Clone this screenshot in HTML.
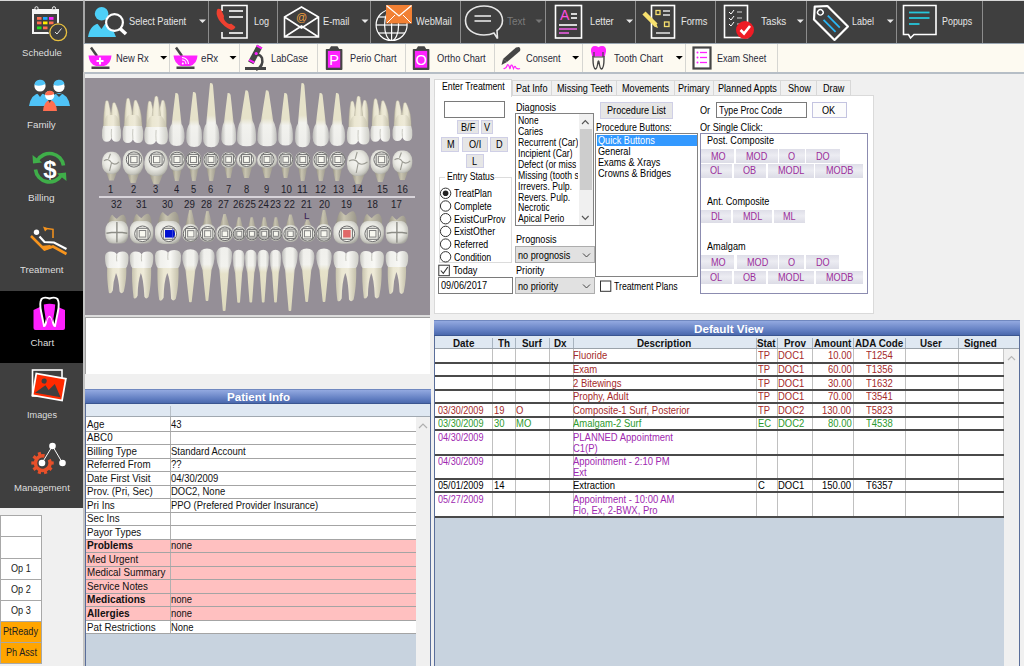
<!DOCTYPE html><html><head><meta charset="utf-8"><style>
html,body{margin:0;padding:0;}
body{width:1024px;height:666px;overflow:hidden;position:relative;background:#f0f0f0;font-family:"Liberation Sans",sans-serif;}
.t{position:absolute;white-space:nowrap;line-height:normal;transform-origin:0 0;}
.r{position:absolute;box-sizing:border-box;}
svg{position:absolute;overflow:visible;}
</style></head><body>
<div class="r" style="left:0px;top:0px;width:1024px;height:1px;background:#d8d8d8;"></div>
<div class="r" style="left:0px;top:1px;width:83px;height:507px;background:#3f3f3f;"></div>
<div class="r" style="left:0px;top:291px;width:83px;height:72px;background:#000;"></div>
<div class="r" style="left:83px;top:0px;width:2px;height:508px;background:#a6a6a6;"></div>
<div class="r" style="left:85px;top:1px;width:939px;height:42px;background:#3f3f3f;"></div>
<div class="r" style="left:84px;top:43px;width:940px;height:1px;background:#9aa6b2;"></div>
<div class="r" style="left:84px;top:44px;width:940px;height:28px;background:#fdfaf1;"></div>
<div class="r" style="left:84px;top:72px;width:940px;height:2px;background:#b6bec6;"></div>
<div class="r" style="left:208px;top:1px;width:1px;height:42px;background:#8c8c8c;"></div>
<div class="r" style="left:277px;top:1px;width:1px;height:42px;background:#8c8c8c;"></div>
<div class="r" style="left:370px;top:1px;width:1px;height:42px;background:#8c8c8c;"></div>
<div class="r" style="left:460px;top:1px;width:1px;height:42px;background:#8c8c8c;"></div>
<div class="r" style="left:545px;top:1px;width:1px;height:42px;background:#8c8c8c;"></div>
<div class="r" style="left:635px;top:1px;width:1px;height:42px;background:#8c8c8c;"></div>
<div class="r" style="left:715px;top:1px;width:1px;height:42px;background:#8c8c8c;"></div>
<div class="r" style="left:806px;top:1px;width:1px;height:42px;background:#8c8c8c;"></div>
<div class="r" style="left:896px;top:1px;width:1px;height:42px;background:#8c8c8c;"></div>
<div class="r" style="left:982px;top:1px;width:1px;height:42px;background:#8c8c8c;"></div>
<div class="r" style="left:169px;top:44px;width:1px;height:28px;background:#d6d6d2;"></div>
<div class="r" style="left:239px;top:44px;width:1px;height:28px;background:#d6d6d2;"></div>
<div class="r" style="left:317px;top:44px;width:1px;height:28px;background:#d6d6d2;"></div>
<div class="r" style="left:405px;top:44px;width:1px;height:28px;background:#d6d6d2;"></div>
<div class="r" style="left:494px;top:44px;width:1px;height:28px;background:#d6d6d2;"></div>
<div class="r" style="left:582px;top:44px;width:1px;height:28px;background:#d6d6d2;"></div>
<div class="r" style="left:685px;top:44px;width:1px;height:28px;background:#d6d6d2;"></div>
<div class="r" style="left:777px;top:44px;width:1px;height:28px;background:#d6d6d2;"></div>
<div class="t" style="left:22.30px;top:46.87px;font-size:9.7px;color:#dedede;transform:scaleX(0.989);">Schedule</div>
<div class="t" style="left:27.10px;top:119.17px;font-size:9.7px;color:#dedede;transform:scaleX(1.008);">Family</div>
<div class="t" style="left:27.80px;top:192.17px;font-size:9.7px;color:#dedede;transform:scaleX(1.028);">Billing</div>
<div class="t" style="left:20.10px;top:264.17px;font-size:9.7px;color:#dedede;transform:scaleX(0.994);">Treatment</div>
<div class="t" style="left:30.55px;top:336.77px;font-size:9.7px;color:#dedede;">Chart</div>
<div class="t" style="left:26.80px;top:409.07px;font-size:9.7px;color:#dedede;transform:scaleX(0.943);">Images</div>
<div class="t" style="left:13.50px;top:481.97px;font-size:9.7px;color:#dedede;transform:scaleX(0.987);">Management</div>
<div class="t" style="left:129.30px;top:15.13px;font-size:11.3px;color:#e6e6e6;transform:scaleX(0.820);">Select Patient</div>
<div class="t" style="left:253.90px;top:15.13px;font-size:11.3px;color:#e6e6e6;transform:scaleX(0.801);">Log</div>
<div class="t" style="left:323.00px;top:15.13px;font-size:11.3px;color:#e6e6e6;transform:scaleX(0.824);">E-mail</div>
<div class="t" style="left:415.70px;top:15.13px;font-size:11.3px;color:#e6e6e6;transform:scaleX(0.816);">WebMail</div>
<div class="t" style="left:506.60px;top:15.13px;font-size:11.3px;color:#7a7a7a;transform:scaleX(0.888);">Text</div>
<div class="t" style="left:590.40px;top:15.13px;font-size:11.3px;color:#e6e6e6;transform:scaleX(0.820);">Letter</div>
<div class="t" style="left:680.80px;top:15.13px;font-size:11.3px;color:#e6e6e6;transform:scaleX(0.822);">Forms</div>
<div class="t" style="left:760.90px;top:15.13px;font-size:11.3px;color:#e6e6e6;transform:scaleX(0.876);">Tasks</div>
<div class="t" style="left:852.20px;top:15.13px;font-size:11.3px;color:#e6e6e6;transform:scaleX(0.792);">Label</div>
<div class="t" style="left:941.80px;top:15.13px;font-size:11.3px;color:#e6e6e6;transform:scaleX(0.788);">Popups</div>
<div class="t" style="left:115.60px;top:52.03px;font-size:11.3px;color:#2a2a3a;transform:scaleX(0.829);">New Rx</div>
<div class="t" style="left:201.20px;top:52.03px;font-size:11.3px;color:#2a2a3a;transform:scaleX(0.856);">eRx</div>
<div class="t" style="left:270.80px;top:52.03px;font-size:11.3px;color:#2a2a3a;transform:scaleX(0.816);">LabCase</div>
<div class="t" style="left:349.80px;top:52.03px;font-size:11.3px;color:#2a2a3a;transform:scaleX(0.815);">Perio Chart</div>
<div class="t" style="left:437.20px;top:52.03px;font-size:11.3px;color:#2a2a3a;transform:scaleX(0.825);">Ortho Chart</div>
<div class="t" style="left:526.30px;top:52.03px;font-size:11.3px;color:#2a2a3a;transform:scaleX(0.820);">Consent</div>
<div class="t" style="left:614.30px;top:52.03px;font-size:11.3px;color:#2a2a3a;transform:scaleX(0.835);">Tooth Chart</div>
<div class="t" style="left:717.40px;top:52.03px;font-size:11.3px;color:#2a2a3a;transform:scaleX(0.799);">Exam Sheet</div>
<svg style="left:0;top:0" width="1024" height="666" viewBox="0 0 1024 666"><rect x="33" y="10" width="25" height="23" fill="none" stroke="#f4f4f4" stroke-width="2"/><rect x="33" y="9" width="25" height="5" fill="#f4f4f4"/><circle cx="36.5" cy="8.3" r="1.6" fill="#3f3f3f" stroke="#f4f4f4" stroke-width="1"/><circle cx="54" cy="8.3" r="1.6" fill="#3f3f3f" stroke="#f4f4f4" stroke-width="1"/><rect x="37" y="17" width="4.5" height="2.8" fill="#ff6e50"/><rect x="43" y="17" width="4.5" height="2.8" fill="#1ea6ff"/><rect x="49" y="17" width="4.5" height="2.8" fill="#ff20ff"/><rect x="37" y="21.5" width="4.5" height="2.8" fill="#ff6e50"/><rect x="43" y="21.5" width="4.5" height="2.8" fill="#ffee00"/><rect x="49" y="21.5" width="4.5" height="2.8" fill="#ff6e50"/><rect x="37" y="26.5" width="4.5" height="2.8" fill="#20e020"/><rect x="43" y="26.5" width="4.5" height="2.8" fill="#ff6e50"/><circle cx="58.2" cy="32.3" r="9.6" fill="#3f3f3f"/><circle cx="58.2" cy="32.3" r="8.4" fill="#3f3f3f" stroke="#e8c040" stroke-width="1.3"/><polyline points="55,32 57,34 61.5,28.5" fill="none" stroke="#e8e8e8" stroke-width="1"/><path d="M29,106 Q31,94 40,93 Q49,94 51,106 Z" fill="#4fc3f7"/><path d="M48,106 Q50,94 59,93 Q68,94 70,106 Z" fill="#4fc3f7"/><path d="M37,93 L40,97 L43,93 Z" fill="#3f3f3f"/><path d="M56,94 L59,97 L62,94 Z" fill="#3f3f3f"/><circle cx="40" cy="86" r="5.6" fill="#fff"/><path d="M34.5,85 A5.6,5.6 0 0 1 45.5,84 Q40,87 34.5,85Z" fill="#4fc3f7"/><circle cx="59" cy="86.5" r="5.6" fill="#fff"/><path d="M53.5,85 A5.6,5.6 0 0 1 64.5,84 Q59,87 53.5,85Z" fill="#4fc3f7"/><path d="M43,111 Q44,101 50,100 Q56,101 57,111 Z" fill="#ff6e50"/><circle cx="49.7" cy="95.5" r="4.6" fill="#fff"/><path d="M45.2,95 A4.6,4.6 0 0 1 54.2,94 Q50,96 45.2,95Z" fill="#ff6e50"/><path d="M48,100 L49.7,103 L51.4,100Z" fill="#3f3f3f"/><path d="M37.5,160.5 A14,14 0 0 1 63.5,165.5" fill="none" stroke="#3fae49" stroke-width="3.6"/><path d="M61.5,175 A14,14 0 0 1 35.5,169.5" fill="none" stroke="#3fae49" stroke-width="3.6"/><path d="M32.5,155 L33,163.5 L42,162.5Z" fill="#3fae49"/><path d="M66.5,181 L66,172.5 L57,173.5Z" fill="#3fae49"/><text x="50" y="177.5" font-family="Liberation Sans" font-weight="bold" font-size="24" fill="#fff" text-anchor="middle">$</text><circle cx="36.5" cy="232.3" r="2.7" fill="#fff"/><polyline points="39.5,236.5 44.5,242 54,242.5 66.5,249" fill="none" stroke="#fff" stroke-width="2.2"/><polyline points="31,236 44.5,249.5 53,246.5 66.5,254" fill="none" stroke="#f7941d" stroke-width="2.6"/><path d="M41,246 L44.5,250.5 L53,247.5 L50,245Z" fill="#f7941d"/><polyline points="44.5,228.3 53,229.3 53,238" fill="none" stroke="#f7941d" stroke-width="1.5"/><path d="M43,226.5 L48,228.5 L45,231.5Z" fill="#f7941d"/><path d="M33.5,310 L40,307 L58,307 L65,310 L65,328 Q65,330 63,330 L35.5,330 Q33.5,330 33.5,328Z" fill="#ff20ff"/><path d="M41.5,299 Q44,296.5 49.5,298.5 Q55,296.5 57.5,299 Q59.8,303 57.8,312 L55,326 Q53.5,326.5 52.5,320 Q49.5,312 46.5,320 Q45.5,326.5 44,326 L41.2,312 Q39.2,303 41.5,299Z" fill="#000" stroke="#fff" stroke-width="1.9"/><path d="M43.8,304.5 Q49.5,303 55.2,304.5 L54.8,309.5 L52.8,322 Q49.5,309.5 46.2,322 L44.2,309.5Z" fill="#ff20ff"/><rect x="32.5" y="370" width="29.5" height="26" fill="none" stroke="#fff" stroke-width="1.6"/><g transform="rotate(10 49 388)"><rect x="34" y="376" width="30" height="22" fill="#ff2a00" stroke="#fff" stroke-width="1.8"/><circle cx="43" cy="382" r="2.6" fill="#3f3f3f"/><path d="M36,395 L45,386 L49,390 L54,383 L62,395Z" fill="#3f3f3f"/></g><path d="M49.2,459.6 A7.3,7.3 0 1 1 44.5,456" fill="none" stroke="#e8502a" stroke-width="3.4"/><rect x="40.9" y="451.8" width="3.2" height="3.6" fill="#e8502a" transform="rotate(90 42.5 463)"/><rect x="40.9" y="451.8" width="3.2" height="3.6" fill="#e8502a" transform="rotate(-18 42.5 463)"/><rect x="40.9" y="451.8" width="3.2" height="3.6" fill="#e8502a" transform="rotate(-54 42.5 463)"/><rect x="40.9" y="451.8" width="3.2" height="3.6" fill="#e8502a" transform="rotate(-90 42.5 463)"/><rect x="40.9" y="451.8" width="3.2" height="3.6" fill="#e8502a" transform="rotate(-126 42.5 463)"/><rect x="40.9" y="451.8" width="3.2" height="3.6" fill="#e8502a" transform="rotate(-162 42.5 463)"/><rect x="40.9" y="451.8" width="3.2" height="3.6" fill="#e8502a" transform="rotate(-198 42.5 463)"/><rect x="40.9" y="451.8" width="3.2" height="3.6" fill="#e8502a" transform="rotate(-234 42.5 463)"/><polyline points="42,463 52.5,446 62.5,463" fill="none" stroke="#fff" stroke-width="1"/><circle cx="42" cy="463" r="3.3" fill="#fff"/><circle cx="52.5" cy="446" r="3.3" fill="#fff"/><circle cx="62.5" cy="463" r="3.3" fill="#fff"/><circle cx="101.6" cy="13.8" r="6.8" fill="#4dcff7"/><path d="M88,37 Q90,24 101,23 Q110,24 113,30 L116,37Z" fill="#4dcff7"/><path d="M97,23 L101.5,29 L105.5,23Z" fill="#3f3f3f"/><circle cx="114.5" cy="22.5" r="8.4" fill="#3f3f3f" stroke="#fff" stroke-width="2.2"/><line x1="120" y1="28.5" x2="126" y2="34" stroke="#fff" stroke-width="3.6"/><path d="M222,11 L222,5.5 L247,5.5 L247,38 L222,38 L222,32" fill="none" stroke="#fff" stroke-width="1.6"/><line x1="229" y1="11" x2="243" y2="11" stroke="#fff" stroke-width="1.6"/><line x1="229" y1="17" x2="243" y2="17" stroke="#fff" stroke-width="1.6"/><line x1="229" y1="33" x2="243" y2="33" stroke="#fff" stroke-width="1.6"/><path d="M217.5,9 Q215,13 219,20 Q224,27 231,30 Q234,30 235.5,27 L231,23.5 Q229,25 226,22 Q223,19 224,16 L221,9.5 Q219,8.5 217.5,9Z" fill="#ee4030"/><path d="M284.5,37 L284.5,17 L301.5,7 L318.5,17 L318.5,37Z M284.5,17 L301.5,28 L318.5,17 M284.5,37 L301.5,26 L318.5,37" fill="none" stroke="#fff" stroke-width="1.6"/><text x="301.5" y="21" font-family="Liberation Sans" font-size="11" fill="#f0a040" text-anchor="middle">@</text><g fill="none" stroke="#fff" stroke-width="1.2"><circle cx="391.6" cy="25" r="15.5"/><ellipse cx="391.6" cy="25" rx="7" ry="15.5"/><line x1="391.6" y1="9.5" x2="391.6" y2="40.5"/><line x1="376" y1="25" x2="407" y2="25"/><line x1="378" y1="17" x2="405" y2="17"/><line x1="378" y1="33" x2="405" y2="33"/></g><rect x="386" y="5" width="26" height="18.5" fill="#f28033"/><polyline points="386.5,5.5 399,16 411.5,5.5" fill="none" stroke="#fff" stroke-width="1.3"/><line x1="387" y1="23" x2="395" y2="15" stroke="#fff" stroke-width="1"/><line x1="411" y1="23" x2="403" y2="15" stroke="#fff" stroke-width="1"/><path d="M484,6 C473,6 465.5,12 465.5,20.5 C465.5,29 473,35 484,35 Q490,35 494,33 L497.5,38.5 L497,30.5 Q502.5,26.5 502.5,20.5 C502.5,12 495,6 484,6Z" fill="none" stroke="#e6e6e6" stroke-width="1.6"/><line x1="474.5" y1="16" x2="491" y2="16" stroke="#e6e6e6" stroke-width="1.6"/><line x1="474.5" y1="21" x2="491" y2="21" stroke="#e6e6e6" stroke-width="1.6"/><rect x="555.5" y="5.5" width="26" height="32.5" fill="none" stroke="#fff" stroke-width="1.6"/><text x="560" y="20" font-family="Liberation Sans" font-size="14" fill="#ff4de0">A</text><line x1="571" y1="14" x2="577" y2="14" stroke="#fff" stroke-width="1.6"/><line x1="571" y1="18" x2="577" y2="18" stroke="#fff" stroke-width="1.6"/><line x1="559" y1="25" x2="577" y2="25" stroke="#fff" stroke-width="1.6"/><line x1="559" y1="29" x2="577" y2="29" stroke="#e85ee0" stroke-width="1.6"/><line x1="559" y1="33" x2="569" y2="33" stroke="#e85ee0" stroke-width="1.6"/><rect x="651.5" y="5.5" width="23" height="32.5" fill="none" stroke="#fff" stroke-width="1.6"/><line x1="644" y1="13" x2="656" y2="25" stroke="#f7e06e" stroke-width="4.5"/><path d="M656.5,24 L658,28 L654,26.5Z" fill="#f7e06e"/><rect x="656" y="10.5" width="4" height="4" fill="none" stroke="#f7e06e" stroke-width="1.3"/><rect x="664.5" y="22" width="4.5" height="4.5" fill="none" stroke="#f7e06e" stroke-width="1.3"/><line x1="663" y1="11" x2="670" y2="11" stroke="#fff" stroke-width="1.3"/><line x1="663" y1="15" x2="670" y2="15" stroke="#fff" stroke-width="1.3"/><line x1="656" y1="33" x2="670" y2="33" stroke="#fff" stroke-width="1.3"/><rect x="724.5" y="5.5" width="23" height="32" fill="none" stroke="#fff" stroke-width="1.6"/><polyline points="729,12 731,14 734,10" fill="none" stroke="#fff" stroke-width="1"/><line x1="737" y1="12" x2="742" y2="12" stroke="#bbb" stroke-width="1.2"/><polyline points="729,18 731,20 734,16" fill="none" stroke="#fff" stroke-width="1"/><line x1="737" y1="18" x2="742" y2="18" stroke="#bbb" stroke-width="1.2"/><polyline points="729,24 731,26 734,22" fill="none" stroke="#fff" stroke-width="1"/><line x1="737" y1="24" x2="742" y2="24" stroke="#bbb" stroke-width="1.2"/><circle cx="745" cy="30" r="9" fill="#ee1c25"/><polyline points="740.5,30 744,33.5 750,26" fill="none" stroke="#fff" stroke-width="2.6"/><g transform="translate(828.5 20.5) rotate(45)"><path d="M-11,-9.5 L18,-9.5 L18,9.5 L-11,9.5 L-19.5,0Z" fill="none" stroke="#fff" stroke-width="2.2" stroke-linejoin="round"/><circle cx="-11.5" cy="0" r="2.8" fill="#3f3f3f" stroke="#fff" stroke-width="1.4"/><line x1="-4" y1="-3" x2="13" y2="-3" stroke="#29b6f6" stroke-width="1.8"/><line x1="-4" y1="3" x2="13" y2="3" stroke="#29b6f6" stroke-width="1.8"/></g><path d="M903.5,5.5 L936,5.5 L936,34.5 L914,34.5 L910.5,38 L908.5,34.5 L903.5,34.5Z" fill="none" stroke="#fff" stroke-width="1.6"/><line x1="909" y1="12.5" x2="929.5" y2="12.5" stroke="#26c6da" stroke-width="1.8"/><line x1="909" y1="18" x2="929.5" y2="18" stroke="#26c6da" stroke-width="1.8"/><line x1="909" y1="24" x2="919.5" y2="24" stroke="#26c6da" stroke-width="1.8"/><path d="M199.0,19.5 L206.0,19.5 L202.5,23Z" fill="#e8e8e8"/><path d="M361.5,19.5 L368.5,19.5 L365,23Z" fill="#e8e8e8"/><path d="M535.5,19.5 L542.5,19.5 L539,23Z" fill="#777"/><path d="M626.1,19.5 L633.1,19.5 L629.6,23Z" fill="#e8e8e8"/><path d="M796.8,19.5 L803.8,19.5 L800.3,23Z" fill="#e8e8e8"/><path d="M886.8,19.5 L893.8,19.5 L890.3,23Z" fill="#e8e8e8"/><line x1="91" y1="47.5" x2="97" y2="56" stroke="#454545" stroke-width="2.5"/><path d="M88.5,55.5 L111.5,55.5 Q111,64 104,66 L96,66 Q89,64 88.5,55.5Z" fill="#ff22ff"/><rect x="91.5" y="66.5" width="18" height="2.5" fill="#454545"/><path d="M99,57.5 h2 v2.5 h2.5 v2 h-2.5 v2.5 h-2 v-2.5 h-2.5 v-2 h2.5z" fill="#fff"/><line x1="176" y1="47.5" x2="182" y2="56" stroke="#454545" stroke-width="2.5"/><path d="M173.5,55.5 L197.5,55.5 Q197,64 190,66 L181,66 Q174.5,64 173.5,55.5Z" fill="#ff22ff"/><rect x="176.5" y="66.5" width="18" height="2.5" fill="#454545"/><g fill="none" stroke="#fff" stroke-width="1.1"><path d="M182,60 A4,4 0 0 1 186,64"/><path d="M182,57.5 A6.5,6.5 0 0 1 188.5,64"/></g><circle cx="182.8" cy="63.5" r="1" fill="#fff"/><rect x="245" y="67" width="21" height="3" fill="#454545"/><path d="M256,70 Q264,66 262,58 Q260,54 256,55" fill="none" stroke="#454545" stroke-width="2.5"/><g transform="rotate(28 255 55)"><rect x="252" y="45" width="6" height="19" fill="#454545"/><rect x="252" y="45" width="6" height="2" fill="#ff22ff"/><rect x="252" y="61" width="6" height="2" fill="#ff22ff"/></g><circle cx="256.2" cy="53.5" r="1.6" fill="#ff22ff"/><rect x="325.8" y="49" width="16.6" height="21" rx="0.8" fill="#454545"/><path d="M331.0,46.3 L337.5,46.3 L339.5,49.5 L329.0,49.5Z" fill="#454545"/><rect x="327.9" y="50.9" width="12.3" height="16.8" fill="#ff22ff"/><text x="334.1" y="64.8" font-family="Liberation Sans" font-size="14.5" fill="#fff" text-anchor="middle">P</text><rect x="412.8" y="49" width="16.6" height="21" rx="0.8" fill="#454545"/><path d="M418.0,46.3 L424.5,46.3 L426.5,49.5 L416.0,49.5Z" fill="#454545"/><rect x="414.9" y="50.9" width="12.3" height="16.8" fill="#ff22ff"/><text x="421.1" y="64.8" font-family="Liberation Sans" font-size="14.5" fill="#fff" text-anchor="middle">O</text><path d="M519,47 Q521,48 520,51 L507,62 L503,59 L516,47.5Z" fill="#454545"/><path d="M503,59 L507,62 L501.5,65Z" fill="#454545"/><path d="M503.5,68.5 Q506,69 507,66 Q507.5,63 509,66 L510,69 Q511,63 512.5,66 L513.5,68.5 Q515,64.5 516,68 Q518,69.5 520,68.5" fill="none" stroke="#ff22ff" stroke-width="1.2"/><path d="M591,51.5 Q590.5,46 595,46 Q597,46 598.5,47.3 Q600,46 602,46 Q606.5,46 606,51.5 L604.8,56.5 L592.2,56.5Z" fill="#ff22ff"/><path d="M593,56 L593,59 Q593,68 595.5,69 Q597,69 598,62 Q598.5,60 599,62 Q600,69 601.5,69 Q604,68 604,59 L604,56" fill="none" stroke="#454545" stroke-width="1.4"/><path d="M594,52 L594,57 L603,57 L603,52" fill="none" stroke="#454545" stroke-width="1.2"/><rect x="693.5" y="47.5" width="17" height="21" fill="#fff" stroke="#454545" stroke-width="2.2"/><circle cx="697.5" cy="52.5" r="1" fill="#ff22ff"/><line x1="700" y1="52.5" x2="707" y2="52.5" stroke="#ff22ff" stroke-width="1.3"/><circle cx="697.5" cy="57.5" r="1" fill="#ff22ff"/><line x1="700" y1="57.5" x2="707" y2="57.5" stroke="#ff22ff" stroke-width="1.3"/><circle cx="697.5" cy="62.5" r="1" fill="#ff22ff"/><line x1="700" y1="62.5" x2="707" y2="62.5" stroke="#ff22ff" stroke-width="1.3"/><path d="M160.2,56 L167.2,56 L163.7,59.5Z" fill="#000"/><path d="M229.5,56 L236.5,56 L233,59.5Z" fill="#000"/><path d="M572.1,56 L579.1,56 L575.6,59.5Z" fill="#000"/><path d="M675.8,56 L682.8,56 L679.3,59.5Z" fill="#000"/></svg>
<div class="r" style="left:85px;top:78px;width:345px;height:237px;background:#958f97;"></div>
<div class="t" style="left:108.40px;top:184.20px;font-size:10px;color:#1e1e2a;transform:scaleX(0.935);">1</div>
<div class="t" style="left:130.90px;top:184.20px;font-size:10px;color:#1e1e2a;transform:scaleX(0.935);">2</div>
<div class="t" style="left:153.40px;top:184.20px;font-size:10px;color:#1e1e2a;transform:scaleX(0.935);">3</div>
<div class="t" style="left:173.90px;top:184.20px;font-size:10px;color:#1e1e2a;transform:scaleX(0.935);">4</div>
<div class="t" style="left:190.90px;top:184.20px;font-size:10px;color:#1e1e2a;transform:scaleX(0.935);">5</div>
<div class="t" style="left:208.30px;top:184.20px;font-size:10px;color:#1e1e2a;transform:scaleX(0.935);">6</div>
<div class="t" style="left:225.70px;top:184.20px;font-size:10px;color:#1e1e2a;transform:scaleX(0.935);">7</div>
<div class="t" style="left:243.80px;top:184.20px;font-size:10px;color:#1e1e2a;transform:scaleX(0.935);">8</div>
<div class="t" style="left:264.40px;top:184.20px;font-size:10px;color:#1e1e2a;transform:scaleX(0.935);">9</div>
<div class="t" style="left:280.60px;top:184.20px;font-size:10px;color:#1e1e2a;transform:scaleX(0.971);">10</div>
<div class="t" style="left:297.30px;top:184.20px;font-size:10px;color:#1e1e2a;transform:scaleX(1.040);">11</div>
<div class="t" style="left:315.10px;top:184.20px;font-size:10px;color:#1e1e2a;transform:scaleX(0.971);">12</div>
<div class="t" style="left:332.50px;top:184.20px;font-size:10px;color:#1e1e2a;transform:scaleX(0.971);">13</div>
<div class="t" style="left:352.30px;top:184.20px;font-size:10px;color:#1e1e2a;transform:scaleX(0.971);">14</div>
<div class="t" style="left:376.60px;top:184.20px;font-size:10px;color:#1e1e2a;transform:scaleX(0.971);">15</div>
<div class="t" style="left:397.40px;top:184.20px;font-size:10px;color:#1e1e2a;transform:scaleX(0.971);">16</div>
<div class="r" style="left:99px;top:196px;width:316px;height:1.6px;background:#d8d4da;"></div>
<div class="t" style="left:111.20px;top:199.40px;font-size:10px;color:#1e1e2a;transform:scaleX(0.971);">32</div>
<div class="t" style="left:135.70px;top:199.40px;font-size:10px;color:#1e1e2a;transform:scaleX(0.971);">31</div>
<div class="t" style="left:162.20px;top:199.40px;font-size:10px;color:#1e1e2a;transform:scaleX(0.971);">30</div>
<div class="t" style="left:184.10px;top:199.40px;font-size:10px;color:#1e1e2a;transform:scaleX(0.971);">29</div>
<div class="t" style="left:201.30px;top:199.40px;font-size:10px;color:#1e1e2a;transform:scaleX(0.971);">28</div>
<div class="t" style="left:218.10px;top:199.40px;font-size:10px;color:#1e1e2a;transform:scaleX(0.971);">27</div>
<div class="t" style="left:233.20px;top:199.40px;font-size:10px;color:#1e1e2a;transform:scaleX(0.971);">26</div>
<div class="t" style="left:245.10px;top:199.40px;font-size:10px;color:#1e1e2a;transform:scaleX(0.971);">25</div>
<div class="t" style="left:257.70px;top:199.40px;font-size:10px;color:#1e1e2a;transform:scaleX(0.971);">24</div>
<div class="t" style="left:269.80px;top:199.40px;font-size:10px;color:#1e1e2a;transform:scaleX(0.971);">23</div>
<div class="t" style="left:283.60px;top:199.40px;font-size:10px;color:#1e1e2a;transform:scaleX(0.971);">22</div>
<div class="t" style="left:301.00px;top:199.40px;font-size:10px;color:#1e1e2a;transform:scaleX(0.971);">21</div>
<div class="t" style="left:318.60px;top:199.40px;font-size:10px;color:#1e1e2a;transform:scaleX(0.971);">20</div>
<div class="t" style="left:340.60px;top:199.40px;font-size:10px;color:#1e1e2a;transform:scaleX(0.971);">19</div>
<div class="t" style="left:366.80px;top:199.40px;font-size:10px;color:#1e1e2a;transform:scaleX(0.971);">18</div>
<div class="t" style="left:391.40px;top:199.40px;font-size:10px;color:#1e1e2a;transform:scaleX(0.971);">17</div>
<div class="t" style="left:303.65px;top:210.25px;font-size:9.5px;color:#3a2050;transform:scaleX(1.041);">L</div>
<svg style="left:0;top:0" width="1024" height="666" viewBox="0 0 1024 666"><defs><linearGradient id="gc" x1="0" x2="1" y1="0" y2="0"><stop offset="0" stop-color="#c8c8c2"/><stop offset="0.2" stop-color="#f0f0ec"/><stop offset="0.6" stop-color="#f8f8f5"/><stop offset="1" stop-color="#cdcdc6"/></linearGradient><linearGradient id="gr" x1="0" x2="1" y1="0" y2="0"><stop offset="0" stop-color="#c8c4ae"/><stop offset="0.3" stop-color="#ebe7d2"/><stop offset="0.6" stop-color="#eeead8"/><stop offset="1" stop-color="#c4c0aa"/></linearGradient><linearGradient id="gu" x1="0" x2="0" y1="0" y2="1"><stop offset="0" stop-color="#e6e2c8"/><stop offset="0.5" stop-color="#e6e2ca"/><stop offset="0.62" stop-color="#f2f2ee"/><stop offset="1" stop-color="#ededea"/></linearGradient><linearGradient id="gl" x1="0" x2="0" y1="0" y2="1"><stop offset="0" stop-color="#f0f0ec"/><stop offset="0.3" stop-color="#f2f2ee"/><stop offset="0.42" stop-color="#e6e2ca"/><stop offset="1" stop-color="#dcd8bc"/></linearGradient><linearGradient id="gs" x1="0" x2="1" y1="0" y2="0"><stop offset="0" stop-color="#000" stop-opacity="0.22"/><stop offset="0.3" stop-color="#000" stop-opacity="0"/><stop offset="0.7" stop-color="#000" stop-opacity="0"/><stop offset="1" stop-color="#000" stop-opacity="0.2"/></linearGradient><radialGradient id="go" cx="0.45" cy="0.42" r="0.62"><stop offset="0" stop-color="#f8f8f4"/><stop offset="0.55" stop-color="#e8e8e2"/><stop offset="0.85" stop-color="#c8c8c0"/><stop offset="1" stop-color="#a8a8a0"/></radialGradient><linearGradient id="gcone" x1="0" x2="1" y1="0" y2="0"><stop offset="0" stop-color="#8e8a7c"/><stop offset="0.4" stop-color="#c8c4b0"/><stop offset="1" stop-color="#9a968a"/></linearGradient></defs><path d="M103.5,128 C103.5,116 104.2,108.3 105.5,101.3 Q107.2,99.3 108.5,101.8 C110.2,110.3 112.5,116 112.5,128 Z" fill="url(#gr)" stroke="#a8a492" stroke-width="0.4"/><path d="M110.5,128 C110.5,116 111.3,110.3 112.6,103.3 Q114.3,101.3 115.6,103.8 C119.3,112.3 119.9,116 119.9,128 Z" fill="url(#gr)" stroke="#a8a492" stroke-width="0.4"/><path d="M103.5,128 C103.9,120 105.8,116 107.7,115 L115.3,115 C117.2,116 119.5,120 119.9,128Z" fill="url(#gr)"/><path d="M103.1,126 L119.9,126 Q121.5,130 121.0,135.8 Q121.0,141.8 116.1,141.8 Q112.6,141.8 111.5,137.8 Q110.4,141.8 106.9,141.8 Q102.0,141.8 102.0,135.8 Q101.5,130 103.1,126 Z" fill="url(#gc)"/><path d="M111.5,137.8 Q111.0,132.8 111.5,129" stroke="#c4c4bc" stroke-width="0.9" fill="none"/><path d="M124.3,128 C124.3,116 125.3,106 126.6,99 Q128.3,97 129.6,99.5 C131.3,108 133.9,116 133.9,128 Z" fill="url(#gr)" stroke="#a8a492" stroke-width="0.4"/><path d="M131.9,128 C131.9,116 132.8,108 134.1,101 Q135.8,99 137.1,101.5 C140.8,110 141.9,116 141.9,128 Z" fill="url(#gr)" stroke="#a8a492" stroke-width="0.4"/><path d="M124.3,128 C124.7,120 126.8,116 128.8,115 L137.0,115 C139.0,116 141.5,120 141.9,128Z" fill="url(#gr)"/><path d="M123.9,126 L141.9,126 Q143.6,130 143.1,137 Q143.1,143 137.8,143 Q134.1,143 132.9,139 Q131.7,143 128.0,143 Q122.7,143 122.7,137 Q122.2,130 123.9,126 Z" fill="url(#gc)"/><path d="M132.9,139 Q132.4,134 132.9,129" stroke="#c4c4bc" stroke-width="0.9" fill="none"/><path d="M146.3,129 C146.3,117 147.0,108.8 148.3,101.8 Q150.0,99.8 151.3,102.3 C153.0,110.8 156.1,117 156.1,129 Z" fill="url(#gr)" stroke="#a8a492" stroke-width="0.4"/><path d="M156.6,129 C156.6,117 160.2,107.8 161.5,100.8 Q163.2,98.8 164.5,101.3 C167.2,109.8 166.4,117 166.4,129 Z" fill="url(#gr)" stroke="#a8a492" stroke-width="0.4"/><path d="M151.4,129 C151.4,117 153.6,103.8 154.9,96.8 Q156.6,94.8 157.9,97.3 C159.6,105.8 161.2,117 161.2,129 Z" fill="url(#gr)" stroke="#a8a492" stroke-width="0.4"/><path d="M146.3,129 C146.7,121 149.1,117 151.4,116 L160.8,116 C163.1,117 165.9,121 166.4,129Z" fill="url(#gr)"/><path d="M145.8,127 L166.4,127 Q168.3,131 167.8,138.5 Q167.8,144.5 161.7,144.5 Q157.5,144.5 156.1,140.5 Q154.7,144.5 150.5,144.5 Q144.4,144.5 144.4,138.5 Q143.9,131 145.8,127 Z" fill="url(#gc)"/><path d="M156.1,140.5 Q155.6,135.5 156.1,130" stroke="#c4c4bc" stroke-width="0.9" fill="none"/><path d="M175.4,93 Q178.1,92.5 178.4,95 L181.5,124 Q184.5,128 184.5,137 Q184.5,146 176.6,146 Q168.7,146 168.7,137 Q168.7,128 171.7,124 Z" fill="url(#gu)"/><path d="M175.4,93 Q178.1,92.5 178.4,95 L181.5,124 Q184.5,128 184.5,137 Q184.5,146 176.6,146 Q168.7,146 168.7,137 Q168.7,128 171.7,124 Z" fill="url(#gs)"/><path d="M193.0,92 Q195.7,91.5 196.0,94 L199.0,124 Q202.0,128 202.0,138 Q202.0,147 194.2,147 Q186.3,147 186.3,138 Q186.3,128 189.3,124 Z" fill="url(#gu)"/><path d="M193.0,92 Q195.7,91.5 196.0,94 L199.0,124 Q202.0,128 202.0,138 Q202.0,147 194.2,147 Q186.3,147 186.3,138 Q186.3,128 189.3,124 Z" fill="url(#gs)"/><path d="M210.0,83.2 Q212.7,82.7 213.0,85.2 L216.2,123.7 Q219.3,127.7 219.3,138.2 Q219.3,147.2 211.2,147.2 Q203.1,147.2 203.1,138.2 Q203.1,127.7 206.2,123.7 Z" fill="url(#gu)"/><path d="M210.0,83.2 Q212.7,82.7 213.0,85.2 L216.2,123.7 Q219.3,127.7 219.3,138.2 Q219.3,147.2 211.2,147.2 Q203.1,147.2 203.1,138.2 Q203.1,127.7 206.2,123.7 Z" fill="url(#gs)"/><path d="M227.6,93.1 Q230.2,92.6 230.6,95.1 L233.5,122 Q236.4,128 236.1,139.4 Q235.4,145.4 228.8,145.4 Q222.1,145.4 221.4,139.4 Q221.1,128 224.0,122 Z" fill="url(#gu)"/><path d="M227.6,93.1 Q230.2,92.6 230.6,95.1 L233.5,122 Q236.4,128 236.1,139.4 Q235.4,145.4 228.8,145.4 Q222.1,145.4 221.4,139.4 Q221.1,128 224.0,122 Z" fill="url(#gs)"/><path d="M245.4,90.4 Q248.1,89.9 248.4,92.4 L252.6,121 Q256.3,127 256.0,140.3 Q255.3,146.3 246.6,146.3 Q237.8,146.3 237.1,140.3 Q236.8,127 240.5,121 Z" fill="url(#gu)"/><path d="M245.4,90.4 Q248.1,89.9 248.4,92.4 L252.6,121 Q256.3,127 256.0,140.3 Q255.3,146.3 246.6,146.3 Q237.8,146.3 237.1,140.3 Q236.8,127 240.5,121 Z" fill="url(#gs)"/><path d="M265.9,90.4 Q268.6,89.9 268.9,92.4 L273.2,121 Q277.0,127 276.7,140.3 Q276.0,146.3 267.1,146.3 Q258.2,146.3 257.5,140.3 Q257.2,127 261.0,121 Z" fill="url(#gu)"/><path d="M265.9,90.4 Q268.6,89.9 268.9,92.4 L273.2,121 Q277.0,127 276.7,140.3 Q276.0,146.3 267.1,146.3 Q258.2,146.3 257.5,140.3 Q257.2,127 261.0,121 Z" fill="url(#gs)"/><path d="M284.3,93.1 Q287.0,92.6 287.3,95.1 L290.3,122 Q293.2,128 292.9,139.4 Q292.2,145.4 285.5,145.4 Q278.9,145.4 278.2,139.4 Q277.9,128 280.8,122 Z" fill="url(#gu)"/><path d="M284.3,93.1 Q287.0,92.6 287.3,95.1 L290.3,122 Q293.2,128 292.9,139.4 Q292.2,145.4 285.5,145.4 Q278.9,145.4 278.2,139.4 Q277.9,128 280.8,122 Z" fill="url(#gs)"/><path d="M301.4,83.2 Q304.1,82.7 304.4,85.2 L307.4,123.7 Q310.3,127.7 310.3,138.2 Q310.3,147.2 302.6,147.2 Q295.0,147.2 295.0,138.2 Q295.0,127.7 297.9,123.7 Z" fill="url(#gu)"/><path d="M301.4,83.2 Q304.1,82.7 304.4,85.2 L307.4,123.7 Q310.3,127.7 310.3,138.2 Q310.3,147.2 302.6,147.2 Q295.0,147.2 295.0,138.2 Q295.0,127.7 297.9,123.7 Z" fill="url(#gs)"/><path d="M319.6,93.1 Q322.3,92.6 322.6,95.1 L325.8,124 Q328.9,128 328.9,137.3 Q328.9,146.3 320.8,146.3 Q312.7,146.3 312.7,137.3 Q312.7,128 315.8,124 Z" fill="url(#gu)"/><path d="M319.6,93.1 Q322.3,92.6 322.6,95.1 L325.8,124 Q328.9,128 328.9,137.3 Q328.9,146.3 320.8,146.3 Q312.7,146.3 312.7,137.3 Q312.7,128 315.8,124 Z" fill="url(#gs)"/><path d="M336.0,93.1 Q338.7,92.6 339.0,95.1 L342.1,124 Q345.1,128 345.1,137 Q345.1,146 337.2,146 Q329.3,146 329.3,137 Q329.3,128 332.3,124 Z" fill="url(#gu)"/><path d="M336.0,93.1 Q338.7,92.6 339.0,95.1 L342.1,124 Q345.1,128 345.1,137 Q345.1,146 337.2,146 Q329.3,146 329.3,137 Q329.3,128 332.3,124 Z" fill="url(#gs)"/><path d="M348.8,129 C348.8,117 349.4,108.8 350.8,101.8 Q352.4,99.8 353.8,102.3 C355.4,110.8 358.2,117 358.2,129 Z" fill="url(#gr)" stroke="#a8a492" stroke-width="0.4"/><path d="M358.7,129 C358.7,117 362.1,107.8 363.4,100.8 Q365.1,98.8 366.4,101.3 C369.1,109.8 368.1,117 368.1,129 Z" fill="url(#gr)" stroke="#a8a492" stroke-width="0.4"/><path d="M353.8,129 C353.8,117 355.8,103.8 357.1,96.8 Q358.8,94.8 360.1,97.3 C361.8,105.8 363.2,117 363.2,129 Z" fill="url(#gr)" stroke="#a8a492" stroke-width="0.4"/><path d="M348.8,129 C349.2,121 351.5,117 353.8,116 L362.8,116 C365.0,117 367.7,121 368.1,129Z" fill="url(#gr)"/><path d="M348.4,127 L368.1,127 Q370.0,131 369.5,138.5 Q369.5,144.5 363.6,144.5 Q359.6,144.5 358.2,140.5 Q356.9,144.5 352.9,144.5 Q347.0,144.5 347.0,138.5 Q346.5,131 348.4,127 Z" fill="url(#gc)"/><path d="M358.2,140.5 Q357.8,135.5 358.2,130" stroke="#c4c4bc" stroke-width="0.9" fill="none"/><path d="M372.0,128 C372.0,116 372.8,106.5 374.1,99.5 Q375.8,97.5 377.1,100.0 C378.8,108.5 381.3,116 381.3,128 Z" fill="url(#gr)" stroke="#a8a492" stroke-width="0.4"/><path d="M379.3,128 C379.3,116 380.2,108.5 381.5,101.5 Q383.2,99.5 384.5,102.0 C388.2,110.5 389.0,116 389.0,128 Z" fill="url(#gr)" stroke="#a8a492" stroke-width="0.4"/><path d="M372.0,128 C372.4,120 374.4,116 376.3,115 L384.3,115 C386.2,116 388.6,120 389.0,128Z" fill="url(#gr)"/><path d="M371.6,126 L389.0,126 Q390.7,130 390.2,135.8 Q390.2,141.8 385.1,141.8 Q381.5,141.8 380.3,137.8 Q379.1,141.8 375.5,141.8 Q370.4,141.8 370.4,135.8 Q369.9,130 371.6,126 Z" fill="url(#gc)"/><path d="M380.3,137.8 Q379.8,132.8 380.3,129" stroke="#c4c4bc" stroke-width="0.9" fill="none"/><path d="M394.1,128 C394.1,116 394.9,108.3 396.2,101.3 Q397.9,99.3 399.2,101.8 C400.9,110.3 403.4,116 403.4,128 Z" fill="url(#gr)" stroke="#a8a492" stroke-width="0.4"/><path d="M401.4,128 C401.4,116 402.3,110.3 403.6,103.3 Q405.3,101.3 406.6,103.8 C410.3,112.3 411.1,116 411.1,128 Z" fill="url(#gr)" stroke="#a8a492" stroke-width="0.4"/><path d="M394.1,128 C394.5,120 396.5,116 398.4,115 L406.4,115 C408.3,116 410.7,120 411.1,128Z" fill="url(#gr)"/><path d="M393.7,126 L411.1,126 Q412.8,130 412.3,134.9 Q412.3,140.9 407.2,140.9 Q403.6,140.9 402.4,136.9 Q401.2,140.9 397.6,140.9 Q392.5,140.9 392.5,134.9 Q392.0,130 393.7,126 Z" fill="url(#gc)"/><path d="M402.4,136.9 Q401.9,131.9 402.4,129" stroke="#c4c4bc" stroke-width="0.9" fill="none"/><path d="M105.4,170 L109.2,180.5 L113.8,180.5 L117.6,170Z" fill="url(#gcone)"/><rect x="102.0" y="151.7" width="19.0" height="22.3" rx="8.0" ry="10.0" fill="url(#go)"/><path d="M104.0,160.8 Q108.5,157.8 111.5,162.8 Q115.5,165.8 119.0,161.8 M111.5,162.8 L109.5,171.0 M108.5,158.8 L110.5,153.7" stroke="#9c9c94" stroke-width="1.1" fill="none"/><path d="M126.4,171 L130.6,183 L135.6,183 L139.8,171Z" fill="url(#gcone)"/><rect x="122.7" y="150.0" width="20.8" height="25.0" rx="8.7" ry="11.2" fill="url(#go)"/><circle cx="133.9" cy="159.5" r="7.6" fill="#fbfbf4" stroke="#6e6e6e" stroke-width="1"/><rect x="128.53" y="154.13" width="10.75" height="10.75" fill="#f6f6ee" stroke="#7a7a7a" stroke-width="1.1"/><rect x="130.71" y="156.31" width="6.38" height="6.38" fill="#f8f8f0" stroke="#808080" stroke-width="1"/><path d="M148.6,172 L153.4,184 L159.0,184 L163.8,172Z" fill="url(#gcone)"/><rect x="144.4" y="150.0" width="23.6" height="26.0" rx="9.9" ry="11.7" fill="url(#go)"/><circle cx="156.7" cy="159.5" r="7.6" fill="#fbfbf4" stroke="#6e6e6e" stroke-width="1"/><rect x="151.33" y="154.13" width="10.75" height="10.75" fill="#f6f6ee" stroke="#7a7a7a" stroke-width="1.1"/><rect x="153.51" y="156.31" width="6.38" height="6.38" fill="#f8f8f0" stroke="#808080" stroke-width="1"/><path d="M171.6,167 L174.9,181 L178.8,181 L182.1,167Z" fill="url(#gcone)"/><rect x="168.7" y="151.0" width="16.3" height="20.0" rx="6.8" ry="9.0" fill="url(#go)"/><circle cx="177" cy="159.5" r="7.3" fill="#fbfbf4" stroke="#6e6e6e" stroke-width="1"/><rect x="171.84" y="154.34" width="10.32" height="10.32" fill="#f6f6ee" stroke="#7a7a7a" stroke-width="1.1"/><rect x="173.93" y="156.43" width="6.13" height="6.13" fill="#f8f8f0" stroke="#808080" stroke-width="1"/><path d="M189.0,166 L192.1,181 L195.7,181 L198.8,166Z" fill="url(#gcone)"/><rect x="186.3" y="151.5" width="15.2" height="18.5" rx="6.4" ry="8.3" fill="url(#go)"/><circle cx="193.4" cy="159.5" r="7.2" fill="#fbfbf4" stroke="#6e6e6e" stroke-width="1"/><rect x="188.31" y="154.41" width="10.18" height="10.18" fill="#f6f6ee" stroke="#7a7a7a" stroke-width="1.1"/><rect x="190.38" y="156.48" width="6.05" height="6.05" fill="#f8f8f0" stroke="#808080" stroke-width="1"/><path d="M206.0,165 L209.3,181 L213.1,181 L216.4,165Z" fill="url(#gcone)"/><rect x="203.1" y="152.0" width="16.2" height="17.0" rx="6.8" ry="7.7" fill="url(#go)"/><circle cx="211" cy="159.5" r="7" fill="#fbfbf4" stroke="#6e6e6e" stroke-width="1"/><rect x="206.05" y="154.55" width="9.90" height="9.90" fill="#f6f6ee" stroke="#7a7a7a" stroke-width="1.1"/><rect x="208.06" y="156.56" width="5.88" height="5.88" fill="#f8f8f0" stroke="#808080" stroke-width="1"/><path d="M223.9,164 L226.9,178 L230.6,178 L233.6,164Z" fill="url(#gcone)"/><rect x="221.1" y="152.0" width="15.3" height="16.0" rx="6.4" ry="7.2" fill="url(#go)"/><circle cx="228.6" cy="159.5" r="6.8" fill="#fbfbf4" stroke="#6e6e6e" stroke-width="1"/><rect x="223.79" y="154.69" width="9.62" height="9.62" fill="#f6f6ee" stroke="#7a7a7a" stroke-width="1.1"/><rect x="225.74" y="156.64" width="5.71" height="5.71" fill="#f8f8f0" stroke="#808080" stroke-width="1"/><path d="M240.3,164 L244.2,178 L248.9,178 L252.8,164Z" fill="url(#gcone)"/><rect x="236.8" y="152.0" width="19.5" height="16.0" rx="8.2" ry="7.2" fill="url(#go)"/><circle cx="246.5" cy="159.5" r="7" fill="#fbfbf4" stroke="#6e6e6e" stroke-width="1"/><rect x="241.55" y="154.55" width="9.90" height="9.90" fill="#f6f6ee" stroke="#7a7a7a" stroke-width="1.1"/><rect x="243.56" y="156.56" width="5.88" height="5.88" fill="#f8f8f0" stroke="#808080" stroke-width="1"/><path d="M260.8,164 L264.7,178 L269.5,178 L273.4,164Z" fill="url(#gcone)"/><rect x="257.2" y="152.0" width="19.8" height="16.0" rx="8.3" ry="7.2" fill="url(#go)"/><circle cx="267" cy="159.5" r="7" fill="#fbfbf4" stroke="#6e6e6e" stroke-width="1"/><rect x="262.05" y="154.55" width="9.90" height="9.90" fill="#f6f6ee" stroke="#7a7a7a" stroke-width="1.1"/><rect x="264.06" y="156.56" width="5.88" height="5.88" fill="#f8f8f0" stroke="#808080" stroke-width="1"/><path d="M280.7,164 L283.7,178 L287.4,178 L290.4,164Z" fill="url(#gcone)"/><rect x="277.9" y="152.0" width="15.3" height="16.0" rx="6.4" ry="7.2" fill="url(#go)"/><circle cx="285.8" cy="159.5" r="6.8" fill="#fbfbf4" stroke="#6e6e6e" stroke-width="1"/><rect x="280.99" y="154.69" width="9.62" height="9.62" fill="#f6f6ee" stroke="#7a7a7a" stroke-width="1.1"/><rect x="282.94" y="156.64" width="5.71" height="5.71" fill="#f8f8f0" stroke="#808080" stroke-width="1"/><path d="M297.8,165 L300.8,181 L304.5,181 L307.5,165Z" fill="url(#gcone)"/><rect x="295.0" y="152.0" width="15.3" height="17.0" rx="6.4" ry="7.7" fill="url(#go)"/><circle cx="302.8" cy="159.5" r="7" fill="#fbfbf4" stroke="#6e6e6e" stroke-width="1"/><rect x="297.85" y="154.55" width="9.90" height="9.90" fill="#f6f6ee" stroke="#7a7a7a" stroke-width="1.1"/><rect x="299.86" y="156.56" width="5.88" height="5.88" fill="#f8f8f0" stroke="#808080" stroke-width="1"/><path d="M315.6,166 L318.9,181 L322.7,181 L326.0,166Z" fill="url(#gcone)"/><rect x="312.7" y="151.5" width="16.2" height="18.5" rx="6.8" ry="8.3" fill="url(#go)"/><circle cx="321.2" cy="159.5" r="7.2" fill="#fbfbf4" stroke="#6e6e6e" stroke-width="1"/><rect x="316.11" y="154.41" width="10.18" height="10.18" fill="#f6f6ee" stroke="#7a7a7a" stroke-width="1.1"/><rect x="318.18" y="156.48" width="6.05" height="6.05" fill="#f8f8f0" stroke="#808080" stroke-width="1"/><path d="M332.1,166 L335.3,181 L339.1,181 L342.3,166Z" fill="url(#gcone)"/><rect x="329.3" y="151.5" width="15.8" height="18.5" rx="6.6" ry="8.3" fill="url(#go)"/><circle cx="337.9" cy="159.5" r="7.2" fill="#fbfbf4" stroke="#6e6e6e" stroke-width="1"/><rect x="332.81" y="154.41" width="10.18" height="10.18" fill="#f6f6ee" stroke="#7a7a7a" stroke-width="1.1"/><rect x="334.88" y="156.48" width="6.05" height="6.05" fill="#f8f8f0" stroke="#808080" stroke-width="1"/><path d="M351.1,172 L355.6,184 L360.9,184 L365.4,172Z" fill="url(#gcone)"/><rect x="347.0" y="150.0" width="22.5" height="26.0" rx="9.4" ry="11.7" fill="url(#go)"/><path d="M349.0,161.0 Q355.2,158.0 358.2,163.0 Q362.2,166.0 367.5,162.0 M358.2,163.0 L356.2,173.0 M355.2,159.0 L357.2,152.0" stroke="#9c9c94" stroke-width="1.1" fill="none"/><path d="M374.0,170 L377.9,182 L382.7,182 L386.6,170Z" fill="url(#gcone)"/><rect x="370.4" y="150.0" width="19.8" height="24.0" rx="8.3" ry="10.8" fill="url(#go)"/><circle cx="381.5" cy="159.5" r="7.6" fill="#fbfbf4" stroke="#6e6e6e" stroke-width="1"/><rect x="376.13" y="154.13" width="10.75" height="10.75" fill="#f6f6ee" stroke="#7a7a7a" stroke-width="1.1"/><rect x="378.31" y="156.31" width="6.38" height="6.38" fill="#f8f8f0" stroke="#808080" stroke-width="1"/><path d="M396.1,169 L400.0,180 L404.8,180 L408.7,169Z" fill="url(#gcone)"/><rect x="392.5" y="150.5" width="19.8" height="22.5" rx="8.3" ry="10.1" fill="url(#go)"/><path d="M394.5,159.8 Q399.4,156.8 402.4,161.8 Q406.4,164.8 410.3,160.8 M402.4,161.8 L400.4,170.0 M399.4,157.8 L401.4,152.5" stroke="#9c9c94" stroke-width="1.1" fill="none"/><path d="M107.4,227 Q110.0,214.8 112.3,214.8 Q115.7,218.8 116.9,218.8 Q121.4,213.8 123.7,214.8 Q127.3,217.8 126.3,227Z" fill="url(#gcone)"/><rect x="105.4" y="221.0" width="22.9" height="22.6" rx="6.9" ry="9.0" fill="url(#go)"/><path d="M106.4,233.3 Q116.9,231.3 127.3,233.3 M116.9,222.0 L116.9,242.6" stroke="#8c8c86" stroke-width="1.4" fill="none"/><path d="M131.8,227 Q134.5,214 136.9,214 Q140.4,218 141.6,218 Q146.2,213 148.6,214 Q152.3,217 151.3,227Z" fill="url(#gcone)"/><rect x="129.8" y="221.0" width="23.5" height="22.5" rx="7.0" ry="9.0" fill="url(#go)"/><circle cx="142.5" cy="233.8" r="7.8" fill="#fbfbf4" stroke="#6e6e6e" stroke-width="1"/><rect x="136.99" y="228.29" width="11.03" height="11.03" fill="#f6f6ee" stroke="#7a7a7a" stroke-width="1.1"/><rect x="139.22" y="230.52" width="6.55" height="6.55" fill="#f8f8f0" stroke="#808080" stroke-width="1"/><path d="M157.0,227 Q160.2,212 162.8,212 Q166.7,216 168.0,216 Q173.2,211 175.8,212 Q180.0,215 179.0,227Z" fill="url(#gcone)"/><rect x="155.0" y="221.0" width="26.0" height="23.0" rx="7.8" ry="9.2" fill="url(#go)"/><circle cx="168.8" cy="233.8" r="7.8" fill="#fbfbf4" stroke="#6e6e6e" stroke-width="1"/><rect x="163.29" y="228.29" width="11.03" height="11.03" fill="#f6f6ee" stroke="#7a7a7a" stroke-width="1.1"/><rect x="165.02" y="230.02" width="7.55" height="7.55" fill="#0010d0"/><path d="M184.7,229 L189.2,210 L191.6,210 L196.1,229Z" fill="url(#gcone)"/><rect x="182.3" y="224.0" width="16.2" height="18.0" rx="7.3" ry="7.2" fill="url(#go)"/><circle cx="190.8" cy="233.8" r="7.5" fill="#fbfbf4" stroke="#6e6e6e" stroke-width="1"/><rect x="185.50" y="228.50" width="10.60" height="10.60" fill="#f6f6ee" stroke="#7a7a7a" stroke-width="1.1"/><rect x="187.65" y="230.65" width="6.30" height="6.30" fill="#f8f8f0" stroke="#808080" stroke-width="1"/><path d="M201.9,229 L206.3,210.9 L208.7,210.9 L213.1,229Z" fill="url(#gcone)"/><rect x="199.5" y="224.0" width="16.0" height="18.0" rx="7.2" ry="7.2" fill="url(#go)"/><circle cx="207.7" cy="233.8" r="7.3" fill="#fbfbf4" stroke="#6e6e6e" stroke-width="1"/><rect x="202.54" y="228.64" width="10.32" height="10.32" fill="#f6f6ee" stroke="#7a7a7a" stroke-width="1.1"/><rect x="204.63" y="230.73" width="6.13" height="6.13" fill="#f8f8f0" stroke="#808080" stroke-width="1"/><path d="M218.8,230 L223.5,214 L225.8,214 L230.5,230Z" fill="url(#gcone)"/><rect x="216.3" y="225.0" width="16.7" height="17.0" rx="7.5" ry="6.8" fill="url(#go)"/><circle cx="224.9" cy="233.8" r="6.8" fill="#fbfbf4" stroke="#6e6e6e" stroke-width="1"/><rect x="220.09" y="228.99" width="9.62" height="9.62" fill="#f6f6ee" stroke="#7a7a7a" stroke-width="1.1"/><rect x="222.04" y="230.94" width="5.71" height="5.71" fill="#f8f8f0" stroke="#808080" stroke-width="1"/><path d="M234.7,231 L238.0,217.3 L240.3,217.3 L243.6,231Z" fill="url(#gcone)"/><rect x="232.8" y="226.0" width="12.7" height="15.0" rx="5.7" ry="6.0" fill="url(#go)"/><circle cx="239.3" cy="233.8" r="6" fill="#fbfbf4" stroke="#6e6e6e" stroke-width="1"/><rect x="235.06" y="229.56" width="8.48" height="8.48" fill="#f6f6ee" stroke="#7a7a7a" stroke-width="1.1"/><rect x="236.78" y="231.28" width="5.04" height="5.04" fill="#f8f8f0" stroke="#808080" stroke-width="1"/><path d="M247.4,231 L250.6,217.3 L252.9,217.3 L256.1,231Z" fill="url(#gcone)"/><rect x="245.5" y="226.0" width="12.5" height="15.0" rx="5.6" ry="6.0" fill="url(#go)"/><circle cx="251.9" cy="233.8" r="6" fill="#fbfbf4" stroke="#6e6e6e" stroke-width="1"/><rect x="247.66" y="229.56" width="8.48" height="8.48" fill="#f6f6ee" stroke="#7a7a7a" stroke-width="1.1"/><rect x="249.38" y="231.28" width="5.04" height="5.04" fill="#f8f8f0" stroke="#808080" stroke-width="1"/><path d="M259.9,231 L263.1,217.3 L265.4,217.3 L268.6,231Z" fill="url(#gcone)"/><rect x="258.0" y="226.0" width="12.5" height="15.0" rx="5.6" ry="6.0" fill="url(#go)"/><circle cx="264.2" cy="233.8" r="6" fill="#fbfbf4" stroke="#6e6e6e" stroke-width="1"/><rect x="259.96" y="229.56" width="8.48" height="8.48" fill="#f6f6ee" stroke="#7a7a7a" stroke-width="1.1"/><rect x="261.68" y="231.28" width="5.04" height="5.04" fill="#f8f8f0" stroke="#808080" stroke-width="1"/><path d="M271.6,231 L274.7,217.3 L277.1,217.3 L280.2,231Z" fill="url(#gcone)"/><rect x="269.8" y="226.0" width="12.2" height="15.0" rx="5.5" ry="6.0" fill="url(#go)"/><circle cx="275.9" cy="233.8" r="6" fill="#fbfbf4" stroke="#6e6e6e" stroke-width="1"/><rect x="271.66" y="229.56" width="8.48" height="8.48" fill="#f6f6ee" stroke="#7a7a7a" stroke-width="1.1"/><rect x="273.38" y="231.28" width="5.04" height="5.04" fill="#f8f8f0" stroke="#808080" stroke-width="1"/><path d="M284.9,230 L289.3,214.4 L291.7,214.4 L296.1,230Z" fill="url(#gcone)"/><rect x="282.5" y="225.0" width="16.0" height="17.0" rx="7.2" ry="6.8" fill="url(#go)"/><circle cx="290.5" cy="233.8" r="6.6" fill="#fbfbf4" stroke="#6e6e6e" stroke-width="1"/><rect x="285.83" y="229.13" width="9.33" height="9.33" fill="#f6f6ee" stroke="#7a7a7a" stroke-width="1.1"/><rect x="287.73" y="231.03" width="5.54" height="5.54" fill="#f8f8f0" stroke="#808080" stroke-width="1"/><path d="M301.9,230 L306.3,219.7 L308.7,219.7 L313.1,230Z" fill="url(#gcone)"/><rect x="299.5" y="225.0" width="16.0" height="17.0" rx="7.2" ry="6.8" fill="url(#go)"/><circle cx="307.5" cy="233.8" r="7.3" fill="#fbfbf4" stroke="#6e6e6e" stroke-width="1"/><rect x="302.34" y="228.64" width="10.32" height="10.32" fill="#f6f6ee" stroke="#7a7a7a" stroke-width="1.1"/><rect x="304.43" y="230.73" width="6.13" height="6.13" fill="#f8f8f0" stroke="#808080" stroke-width="1"/><path d="M318.6,229 L322.8,210 L325.2,210 L329.3,229Z" fill="url(#gcone)"/><rect x="316.3" y="224.0" width="15.3" height="18.0" rx="6.9" ry="7.2" fill="url(#go)"/><circle cx="324" cy="233.8" r="7.3" fill="#fbfbf4" stroke="#6e6e6e" stroke-width="1"/><rect x="318.84" y="228.64" width="10.32" height="10.32" fill="#f6f6ee" stroke="#7a7a7a" stroke-width="1.1"/><rect x="320.93" y="230.73" width="6.13" height="6.13" fill="#f8f8f0" stroke="#808080" stroke-width="1"/><path d="M335.4,227 Q338.4,211.3 341.0,211.3 Q344.7,215.3 346.0,215.3 Q351.0,210.3 353.6,211.3 Q357.6,214.3 356.6,227Z" fill="url(#gcone)"/><rect x="333.4" y="221.0" width="25.2" height="22.7" rx="7.6" ry="9.1" fill="url(#go)"/><circle cx="346.9" cy="233.8" r="7.8" fill="#fbfbf4" stroke="#6e6e6e" stroke-width="1"/><rect x="341.39" y="228.29" width="11.03" height="11.03" fill="#f6f6ee" stroke="#7a7a7a" stroke-width="1.1"/><rect x="343.12" y="230.02" width="7.55" height="7.55" fill="#e06868"/><path d="M362.0,227 Q364.8,214 367.2,214 Q370.8,218 371.9,218 Q376.7,213 379.1,214 Q382.9,217 381.9,227Z" fill="url(#gcone)"/><rect x="360.0" y="221.0" width="23.9" height="22.7" rx="7.2" ry="9.1" fill="url(#go)"/><circle cx="372.7" cy="233.8" r="7.8" fill="#fbfbf4" stroke="#6e6e6e" stroke-width="1"/><rect x="367.19" y="228.29" width="11.03" height="11.03" fill="#f6f6ee" stroke="#7a7a7a" stroke-width="1.1"/><rect x="369.42" y="230.52" width="6.55" height="6.55" fill="#f8f8f0" stroke="#808080" stroke-width="1"/><path d="M387.7,227 Q390.2,215.8 392.4,215.8 Q395.8,219.8 396.9,219.8 Q401.4,214.8 403.7,215.8 Q407.2,218.8 406.2,227Z" fill="url(#gcone)"/><rect x="385.7" y="221.0" width="22.5" height="22.7" rx="6.8" ry="9.1" fill="url(#go)"/><path d="M386.7,233.3 Q396.9,231.3 407.2,233.3 M396.9,222.0 L396.9,242.7" stroke="#8c8c86" stroke-width="1.4" fill="none"/><path d="M172.5,228.6 Q177.5,233.8 172.5,239 Z" fill="#0010d0"/><path d="M107.3,266 C106.9,276 107.3,281.4 108.8,292.4 Q110.6,294.9 112.8,290.4 Q113.0,282 116.0,273 Q118.6,278 119.6,291.4 Q121.5,294.9 123.8,291.4 C126.2,281.4 126.6,274 126.2,266 Z" fill="url(#gr)"/><path d="M105.0,257.4 Q105.0,251.4 110.9,251.4 Q115.6,251.4 116.8,254.4 Q117.9,251.4 122.6,251.4 Q128.5,251.4 128.5,257.4 Q128.5,266 125.7,268 L107.8,268 Q105.0,266 105.0,257.4Z" fill="url(#gc)"/><path d="M116.8,254.4 Q116.2,258.4 116.8,261.4" stroke="#c0c0b8" stroke-width="0.9" fill="none"/><path d="M132.2,266 C131.7,276 132.2,286.7 133.6,297.7 Q135.4,300.2 137.6,295.7 Q137.8,282 140.8,273 Q143.4,278 144.4,296.7 Q146.2,300.2 148.6,296.7 C151.0,286.7 151.4,274 151.0,266 Z" fill="url(#gr)"/><path d="M129.8,257.4 Q129.8,251.4 135.7,251.4 Q140.4,251.4 141.6,254.4 Q142.7,251.4 147.4,251.4 Q153.3,251.4 153.3,257.4 Q153.3,266 150.5,268 L132.6,268 Q129.8,266 129.8,257.4Z" fill="url(#gc)"/><path d="M141.6,254.4 Q141.1,258.4 141.6,261.4" stroke="#c0c0b8" stroke-width="0.9" fill="none"/><path d="M157.6,266 C157.1,276 157.6,288.8 159.2,299.8 Q161.2,302.3 163.6,297.8 Q163.8,282 167.2,273 Q170.1,278 171.1,298.8 Q173.2,302.3 175.8,298.8 C178.4,288.8 178.9,274 178.4,266 Z" fill="url(#gr)"/><path d="M155.0,256 Q155.0,250 161.5,250 Q166.7,250 168.0,253 Q169.3,250 174.5,250 Q181.0,250 181.0,256 Q181.0,266 177.9,268 L158.1,268 Q155.0,266 155.0,256Z" fill="url(#gc)"/><path d="M168.0,253 Q167.5,257 168.0,260" stroke="#c0c0b8" stroke-width="0.9" fill="none"/><path d="M190.4,249.3 Q198.5,249.3 198.5,257.3 Q198.5,262 195.3,270 L191.7,301.8 Q190.4,302.8 189.1,301.8 L185.5,270 Q182.3,262 182.3,257.3 Q182.3,249.3 190.4,249.3Z" fill="url(#gl)"/><path d="M190.4,249.3 Q198.5,249.3 198.5,257.3 Q198.5,262 195.3,270 L191.7,301.8 Q190.4,302.8 189.1,301.8 L185.5,270 Q182.3,262 182.3,257.3 Q182.3,249.3 190.4,249.3Z" fill="url(#gs)"/><path d="M207.0,248.6 Q214.5,248.6 214.5,256.6 Q214.5,262 211.5,270 L208.3,300.5 Q207.0,301.5 205.7,300.5 L202.5,270 Q199.5,262 199.5,256.6 Q199.5,248.6 207.0,248.6Z" fill="url(#gl)"/><path d="M207.0,248.6 Q214.5,248.6 214.5,256.6 Q214.5,262 211.5,270 L208.3,300.5 Q207.0,301.5 205.7,300.5 L202.5,270 Q199.5,262 199.5,256.6 Q199.5,248.6 207.0,248.6Z" fill="url(#gs)"/><path d="M224.2,247 Q232.0,247 232.0,255 Q232.0,262 228.9,270 L225.5,310.4 Q224.2,311.4 222.8,310.4 L219.4,270 Q216.3,262 216.3,255 Q216.3,247 224.2,247Z" fill="url(#gl)"/><path d="M224.2,247 Q232.0,247 232.0,255 Q232.0,262 228.9,270 L225.5,310.4 Q224.2,311.4 222.8,310.4 L219.4,270 Q216.3,262 216.3,255 Q216.3,247 224.2,247Z" fill="url(#gs)"/><path d="M238.7,249.7 Q244.5,249.7 244.5,257.7 Q244.5,265 242.2,273 L240.0,302.3 Q238.7,303.3 237.3,302.3 L235.1,273 Q232.8,265 232.8,257.7 Q232.8,249.7 238.7,249.7Z" fill="url(#gl)"/><path d="M238.7,249.7 Q244.5,249.7 244.5,257.7 Q244.5,265 242.2,273 L240.0,302.3 Q238.7,303.3 237.3,302.3 L235.1,273 Q232.8,265 232.8,257.7 Q232.8,249.7 238.7,249.7Z" fill="url(#gs)"/><path d="M250.8,249.7 Q256.6,249.7 256.6,257.7 Q256.6,265 254.3,273 L252.1,302 Q250.8,303 249.5,302 L247.3,273 Q245.0,265 245.0,257.7 Q245.0,249.7 250.8,249.7Z" fill="url(#gl)"/><path d="M250.8,249.7 Q256.6,249.7 256.6,257.7 Q256.6,265 254.3,273 L252.1,302 Q250.8,303 249.5,302 L247.3,273 Q245.0,265 245.0,257.7 Q245.0,249.7 250.8,249.7Z" fill="url(#gs)"/><path d="M263.2,249.7 Q268.9,249.7 268.9,257.7 Q268.9,265 266.6,273 L264.5,302 Q263.2,303 261.9,302 L259.8,273 Q257.5,265 257.5,257.7 Q257.5,249.7 263.2,249.7Z" fill="url(#gl)"/><path d="M263.2,249.7 Q268.9,249.7 268.9,257.7 Q268.9,265 266.6,273 L264.5,302 Q263.2,303 261.9,302 L259.8,273 Q257.5,265 257.5,257.7 Q257.5,249.7 263.2,249.7Z" fill="url(#gs)"/><path d="M275.5,249.7 Q281.1,249.7 281.1,257.7 Q281.1,265 278.8,273 L276.8,302 Q275.5,303 274.2,302 L272.1,273 Q269.8,265 269.8,257.7 Q269.8,249.7 275.5,249.7Z" fill="url(#gl)"/><path d="M275.5,249.7 Q281.1,249.7 281.1,257.7 Q281.1,265 278.8,273 L276.8,302 Q275.5,303 274.2,302 L272.1,273 Q269.8,265 269.8,257.7 Q269.8,249.7 275.5,249.7Z" fill="url(#gs)"/><path d="M289.9,247 Q297.7,247 297.7,255 Q297.7,262 294.6,270 L291.2,310.4 Q289.9,311.4 288.6,310.4 L285.1,270 Q282.0,262 282.0,255 Q282.0,247 289.9,247Z" fill="url(#gl)"/><path d="M289.9,247 Q297.7,247 297.7,255 Q297.7,262 294.6,270 L291.2,310.4 Q289.9,311.4 288.6,310.4 L285.1,270 Q282.0,262 282.0,255 Q282.0,247 289.9,247Z" fill="url(#gs)"/><path d="M306.7,248.6 Q314.3,248.6 314.3,256.6 Q314.3,262 311.3,270 L308.0,301.4 Q306.7,302.4 305.4,301.4 L302.1,270 Q299.1,262 299.1,256.6 Q299.1,248.6 306.7,248.6Z" fill="url(#gl)"/><path d="M306.7,248.6 Q314.3,248.6 314.3,256.6 Q314.3,262 311.3,270 L308.0,301.4 Q306.7,302.4 305.4,301.4 L302.1,270 Q299.1,262 299.1,256.6 Q299.1,248.6 306.7,248.6Z" fill="url(#gs)"/><path d="M324.0,248.6 Q331.6,248.6 331.6,256.6 Q331.6,262 328.5,270 L325.3,301.4 Q324.0,302.4 322.7,301.4 L319.4,270 Q316.3,262 316.3,256.6 Q316.3,248.6 324.0,248.6Z" fill="url(#gl)"/><path d="M324.0,248.6 Q331.6,248.6 331.6,256.6 Q331.6,262 328.5,270 L325.3,301.4 Q324.0,302.4 322.7,301.4 L319.4,270 Q316.3,262 316.3,256.6 Q316.3,248.6 324.0,248.6Z" fill="url(#gs)"/><path d="M335.9,266 C335.4,276 335.9,289.4 337.4,300.4 Q339.4,302.9 341.7,298.4 Q342.0,282 345.2,273 Q348.0,278 349.0,299.4 Q351.0,302.9 353.6,299.4 C356.1,289.4 356.6,274 356.1,266 Z" fill="url(#gr)"/><path d="M333.4,257 Q333.4,251 339.7,251 Q344.7,251 346.0,254 Q347.3,251 352.3,251 Q358.6,251 358.6,257 Q358.6,266 355.6,268 L336.4,268 Q333.4,266 333.4,257Z" fill="url(#gc)"/><path d="M346.0,254 Q345.5,258 346.0,261" stroke="#c0c0b8" stroke-width="0.9" fill="none"/><path d="M362.4,266 C361.9,276 362.4,286.7 363.8,297.7 Q365.7,300.2 367.9,295.7 Q368.1,282 371.2,273 Q373.9,278 374.8,296.7 Q376.7,300.2 379.1,296.7 C381.5,286.7 382.0,274 381.5,266 Z" fill="url(#gr)"/><path d="M360.0,257 Q360.0,251 366.0,251 Q370.8,251 371.9,254 Q373.1,251 377.9,251 Q383.9,251 383.9,257 Q383.9,266 381.0,268 L362.9,268 Q360.0,266 360.0,257Z" fill="url(#gc)"/><path d="M371.9,254 Q371.4,258 371.9,261" stroke="#c0c0b8" stroke-width="0.9" fill="none"/><path d="M387.9,265 C387.5,275 387.9,282.2 389.3,293.2 Q391.1,295.7 393.1,291.2 Q393.3,281 396.3,272 Q398.8,277 399.6,292.2 Q401.4,295.7 403.7,292.2 C405.9,282.2 406.4,273 405.9,265 Z" fill="url(#gr)"/><path d="M385.7,257 Q385.7,251 391.3,251 Q395.8,251 396.9,254 Q398.1,251 402.6,251 Q408.2,251 408.2,257 Q408.2,265 405.5,267 L388.4,267 Q385.7,265 385.7,257Z" fill="url(#gc)"/><path d="M396.9,254 Q396.4,258 396.9,261" stroke="#c0c0b8" stroke-width="0.9" fill="none"/></svg>
<div class="r" style="left:83px;top:72px;width:2px;height:594px;background:#c4c4c4;"></div>
<div class="r" style="left:0px;top:508px;width:83px;height:158px;background:#f0f0f0;"></div>
<div class="r" style="left:83px;top:0px;width:2px;height:1px;background:#c4c4c4;"></div>
<div class="r" style="left:85px;top:317px;width:345px;height:57px;background:#fff;border-top:1px solid #a0a0a0;border-left:1px solid #a0a0a0;"></div>
<div class="r" style="left:85px;top:315px;width:345px;height:2px;background:#dcdcdc;"></div>
<div class="r" style="left:0px;top:515px;width:42px;height:22px;background:#fff;border:1px solid #a8a8a8;"></div>
<div class="r" style="left:0px;top:536px;width:42px;height:23px;background:#fff;border:1px solid #a8a8a8;"></div>
<div class="r" style="left:0px;top:558px;width:42px;height:22px;background:#fff;border:1px solid #a8a8a8;"></div>
<div class="t" style="left:11.10px;top:561.90px;font-size:11px;color:#222;transform:scaleX(0.830);">Op 1</div>
<div class="r" style="left:0px;top:579px;width:42px;height:22px;background:#fff;border:1px solid #a8a8a8;"></div>
<div class="t" style="left:11.10px;top:582.90px;font-size:11px;color:#222;transform:scaleX(0.830);">Op 2</div>
<div class="r" style="left:0px;top:600px;width:42px;height:22px;background:#fff;border:1px solid #a8a8a8;"></div>
<div class="t" style="left:11.10px;top:603.90px;font-size:11px;color:#222;transform:scaleX(0.830);">Op 3</div>
<div class="r" style="left:0px;top:621px;width:42px;height:22px;background:#ffa500;border:1px solid #a8a8a8;"></div>
<div class="t" style="left:3.49px;top:624.90px;font-size:11px;color:#222;transform:scaleX(0.830);">PtReady</div>
<div class="r" style="left:0px;top:642px;width:42px;height:22px;background:#ffa500;border:1px solid #a8a8a8;"></div>
<div class="t" style="left:5.52px;top:645.90px;font-size:11px;color:#222;transform:scaleX(0.830);">Ph Asst</div>
<div class="r" style="left:85px;top:389px;width:346px;height:277px;background:#c8d3df;border-left:1px solid #5a6e9a;border-right:1px solid #5a6e9a;"></div>
<div class="r" style="left:85px;top:389px;width:346px;height:15px;background:linear-gradient(#93a9e0,#5f7cc0 70%,#4a68ac);border-bottom:1px solid #3a5590;border-top:1px solid #7088c0"></div>
<div class="t" style="left:226.90px;top:391.00px;font-size:11px;color:#fff;font-weight:bold;transform:scaleX(1.052);">Patient Info</div>
<div class="r" style="left:86px;top:404px;width:344px;height:13px;background:#dfe8f2;border-bottom:1px solid #a0a8b0;"></div>
<div class="r" style="left:170px;top:406px;width:1px;height:10px;background:#b8c0c8;"></div>
<div class="r" style="left:416px;top:417px;width:14px;height:249px;background:#f0f0f0;"></div>
<svg style="left:0;top:0" width="1024" height="666"><polyline points="419,428 423,424 427,428" fill="none" stroke="#b0b0b0" stroke-width="1.2"/></svg>
<div class="r" style="left:86px;top:417px;width:330px;height:14px;background:#fff;"></div>
<div class="r" style="left:170px;top:417px;width:1px;height:14px;background:#b0b0b0;"></div>
<div class="t" style="left:86.60px;top:417.60px;font-size:11px;color:#111;transform:scaleX(0.890);">Age</div>
<div class="t" style="left:170.70px;top:417.60px;font-size:11px;color:#111;transform:scaleX(0.860);">43</div>
<div class="r" style="left:86px;top:431px;width:330px;height:13px;background:#fff;"></div>
<div class="r" style="left:170px;top:431px;width:1px;height:13px;background:#b0b0b0;"></div>
<div class="t" style="left:86.60px;top:431.13px;font-size:11px;color:#111;transform:scaleX(0.890);">ABC0</div>
<div class="r" style="left:86px;top:444px;width:330px;height:14px;background:#fff;"></div>
<div class="r" style="left:170px;top:444px;width:1px;height:14px;background:#b0b0b0;"></div>
<div class="t" style="left:86.60px;top:444.66px;font-size:11px;color:#111;transform:scaleX(0.890);">Billing Type</div>
<div class="t" style="left:170.70px;top:444.66px;font-size:11px;color:#111;transform:scaleX(0.860);">Standard Account</div>
<div class="r" style="left:86px;top:458px;width:330px;height:13px;background:#fff;"></div>
<div class="r" style="left:170px;top:458px;width:1px;height:13px;background:#b0b0b0;"></div>
<div class="t" style="left:86.60px;top:458.19px;font-size:11px;color:#111;transform:scaleX(0.890);">Referred From</div>
<div class="t" style="left:170.70px;top:458.19px;font-size:11px;color:#111;transform:scaleX(0.860);">??</div>
<div class="r" style="left:86px;top:471px;width:330px;height:14px;background:#fff;"></div>
<div class="r" style="left:170px;top:471px;width:1px;height:14px;background:#b0b0b0;"></div>
<div class="t" style="left:86.60px;top:471.72px;font-size:11px;color:#111;transform:scaleX(0.890);">Date First Visit</div>
<div class="t" style="left:170.70px;top:471.72px;font-size:11px;color:#111;transform:scaleX(0.860);">04/30/2009</div>
<div class="r" style="left:86px;top:485px;width:330px;height:13px;background:#fff;"></div>
<div class="r" style="left:170px;top:485px;width:1px;height:13px;background:#b0b0b0;"></div>
<div class="t" style="left:86.60px;top:485.25px;font-size:11px;color:#111;transform:scaleX(0.890);">Prov. (Pri, Sec)</div>
<div class="t" style="left:170.70px;top:485.25px;font-size:11px;color:#111;transform:scaleX(0.860);">DOC2, None</div>
<div class="r" style="left:86px;top:498px;width:330px;height:14px;background:#fff;"></div>
<div class="r" style="left:170px;top:498px;width:1px;height:14px;background:#b0b0b0;"></div>
<div class="t" style="left:86.60px;top:498.78px;font-size:11px;color:#111;transform:scaleX(0.890);">Pri Ins</div>
<div class="t" style="left:170.70px;top:498.78px;font-size:11px;color:#111;transform:scaleX(0.860);">PPO (Prefered Provider Insurance)</div>
<div class="r" style="left:86px;top:512px;width:330px;height:13px;background:#fff;"></div>
<div class="r" style="left:170px;top:512px;width:1px;height:13px;background:#b0b0b0;"></div>
<div class="t" style="left:86.60px;top:512.31px;font-size:11px;color:#111;transform:scaleX(0.890);">Sec Ins</div>
<div class="r" style="left:86px;top:525px;width:330px;height:14px;background:#fff;"></div>
<div class="r" style="left:170px;top:525px;width:1px;height:14px;background:#b0b0b0;"></div>
<div class="t" style="left:86.60px;top:525.84px;font-size:11px;color:#111;transform:scaleX(0.890);">Payor Types</div>
<div class="r" style="left:86px;top:539px;width:330px;height:13px;background:#ffc0c0;"></div>
<div class="r" style="left:170px;top:539px;width:1px;height:13px;background:#b0b0b0;"></div>
<div class="t" style="left:86.60px;top:539.37px;font-size:11px;color:#111;font-weight:bold;transform:scaleX(0.920);">Problems</div>
<div class="t" style="left:170.70px;top:539.37px;font-size:11px;color:#111;transform:scaleX(0.860);">none</div>
<div class="r" style="left:86px;top:552px;width:330px;height:14px;background:#ffc0c0;"></div>
<div class="r" style="left:170px;top:552px;width:1px;height:14px;background:#b0b0b0;"></div>
<div class="t" style="left:86.60px;top:552.90px;font-size:11px;color:#111;transform:scaleX(0.890);">Med Urgent</div>
<div class="r" style="left:86px;top:566px;width:330px;height:13px;background:#ffc0c0;"></div>
<div class="r" style="left:170px;top:566px;width:1px;height:13px;background:#b0b0b0;"></div>
<div class="t" style="left:86.60px;top:566.43px;font-size:11px;color:#111;transform:scaleX(0.890);">Medical Summary</div>
<div class="r" style="left:86px;top:579px;width:330px;height:14px;background:#ffc0c0;"></div>
<div class="r" style="left:170px;top:579px;width:1px;height:14px;background:#b0b0b0;"></div>
<div class="t" style="left:86.60px;top:579.96px;font-size:11px;color:#111;transform:scaleX(0.890);">Service Notes</div>
<div class="r" style="left:86px;top:593px;width:330px;height:13px;background:#ffc0c0;"></div>
<div class="r" style="left:170px;top:593px;width:1px;height:13px;background:#b0b0b0;"></div>
<div class="t" style="left:86.60px;top:593.49px;font-size:11px;color:#111;font-weight:bold;transform:scaleX(0.920);">Medications</div>
<div class="t" style="left:170.70px;top:593.49px;font-size:11px;color:#111;transform:scaleX(0.860);">none</div>
<div class="r" style="left:86px;top:606px;width:330px;height:14px;background:#ffc0c0;"></div>
<div class="r" style="left:170px;top:606px;width:1px;height:14px;background:#b0b0b0;"></div>
<div class="t" style="left:86.60px;top:607.02px;font-size:11px;color:#111;font-weight:bold;transform:scaleX(0.920);">Allergies</div>
<div class="t" style="left:170.70px;top:607.02px;font-size:11px;color:#111;transform:scaleX(0.860);">none</div>
<div class="r" style="left:86px;top:620px;width:330px;height:13px;background:#fff;"></div>
<div class="r" style="left:170px;top:620px;width:1px;height:13px;background:#b0b0b0;"></div>
<div class="t" style="left:86.60px;top:620.55px;font-size:11px;color:#111;transform:scaleX(0.890);">Pat Restrictions</div>
<div class="t" style="left:170.70px;top:620.55px;font-size:11px;color:#111;transform:scaleX(0.860);">None</div>
<div class="r" style="left:86px;top:430.5px;width:330px;height:1.2px;background:#a4a4a4;"></div>
<div class="r" style="left:86px;top:443.5px;width:330px;height:1.2px;background:#a4a4a4;"></div>
<div class="r" style="left:86px;top:457.5px;width:330px;height:1.2px;background:#a4a4a4;"></div>
<div class="r" style="left:86px;top:470.5px;width:330px;height:1.2px;background:#a4a4a4;"></div>
<div class="r" style="left:86px;top:484.5px;width:330px;height:1.2px;background:#a4a4a4;"></div>
<div class="r" style="left:86px;top:497.5px;width:330px;height:1.2px;background:#a4a4a4;"></div>
<div class="r" style="left:86px;top:511.5px;width:330px;height:1.2px;background:#a4a4a4;"></div>
<div class="r" style="left:86px;top:524.5px;width:330px;height:1.2px;background:#a4a4a4;"></div>
<div class="r" style="left:86px;top:538.5px;width:330px;height:1.2px;background:#a4a4a4;"></div>
<div class="r" style="left:86px;top:551.5px;width:330px;height:1.2px;background:#a4a4a4;"></div>
<div class="r" style="left:86px;top:565.5px;width:330px;height:1.2px;background:#a4a4a4;"></div>
<div class="r" style="left:86px;top:578.5px;width:330px;height:1.2px;background:#a4a4a4;"></div>
<div class="r" style="left:86px;top:592.5px;width:330px;height:1.2px;background:#a4a4a4;"></div>
<div class="r" style="left:86px;top:605.5px;width:330px;height:1.2px;background:#a4a4a4;"></div>
<div class="r" style="left:86px;top:619.5px;width:330px;height:1.2px;background:#a4a4a4;"></div>
<div class="r" style="left:86px;top:632.5px;width:330px;height:1.2px;background:#a4a4a4;"></div>
<div class="r" style="left:434px;top:95px;width:440px;height:219px;background:#fff;border:1px solid #dadada;"></div>
<div class="r" style="left:512px;top:80px;width:40px;height:16px;background:#f0f0f0;border:1px solid #d8d8d8;"></div>
<div class="t" style="left:516.22px;top:81.60px;font-size:11px;color:#000;transform:scaleX(0.830);">Pat Info</div>
<div class="r" style="left:551px;top:80px;width:66px;height:16px;background:#f0f0f0;border:1px solid #d8d8d8;"></div>
<div class="t" style="left:556.52px;top:81.60px;font-size:11px;color:#000;transform:scaleX(0.830);">Missing Teeth</div>
<div class="r" style="left:616px;top:80px;width:59px;height:16px;background:#f0f0f0;border:1px solid #d8d8d8;"></div>
<div class="t" style="left:621.81px;top:81.60px;font-size:11px;color:#000;transform:scaleX(0.830);">Movements</div>
<div class="r" style="left:674px;top:80px;width:40px;height:16px;background:#f0f0f0;border:1px solid #d8d8d8;"></div>
<div class="t" style="left:677.83px;top:81.60px;font-size:11px;color:#000;transform:scaleX(0.830);">Primary</div>
<div class="r" style="left:713px;top:80px;width:68px;height:16px;background:#f0f0f0;border:1px solid #d8d8d8;"></div>
<div class="t" style="left:717.56px;top:81.60px;font-size:11px;color:#000;transform:scaleX(0.830);">Planned Appts</div>
<div class="r" style="left:780px;top:80px;width:37px;height:16px;background:#f0f0f0;border:1px solid #d8d8d8;"></div>
<div class="t" style="left:787.53px;top:81.60px;font-size:11px;color:#000;transform:scaleX(0.830);">Show</div>
<div class="r" style="left:816px;top:80px;width:35px;height:16px;background:#f0f0f0;border:1px solid #d8d8d8;"></div>
<div class="t" style="left:822.90px;top:81.60px;font-size:11px;color:#000;transform:scaleX(0.830);">Draw</div>
<div class="r" style="left:434px;top:78.5px;width:77.5px;height:18px;background:#fff;border:1px solid #d8d8d8;border-bottom:none;"></div>
<div class="t" style="left:441.70px;top:80.40px;font-size:11px;color:#000;transform:scaleX(0.794);">Enter Treatment</div>
<div class="r" style="left:444px;top:101px;width:61px;height:17px;background:#fff;border:1px solid #7a7a7a;"></div>
<div class="r" style="left:457px;top:120px;width:22px;height:14px;background:#e6e6e6;border:1px solid #cfcfe6;"></div>
<div class="t" style="left:460.90px;top:120.95px;font-size:11px;color:#000;transform:scaleX(0.830);">B/F</div>
<div class="r" style="left:481px;top:120px;width:12px;height:14px;background:#e6e6e6;border:1px solid #cfcfe6;"></div>
<div class="t" style="left:484.21px;top:120.95px;font-size:11px;color:#000;transform:scaleX(0.830);">V</div>
<div class="r" style="left:441px;top:137px;width:18px;height:15px;background:#e6e6e6;border:1px solid #cfcfe6;"></div>
<div class="t" style="left:446.50px;top:138.00px;font-size:11px;color:#000;transform:scaleX(0.830);">M</div>
<div class="r" style="left:462px;top:137px;width:26px;height:15px;background:#e6e6e6;border:1px solid #cfcfe6;"></div>
<div class="t" style="left:468.66px;top:138.00px;font-size:11px;color:#000;transform:scaleX(0.830);">O/I</div>
<div class="r" style="left:490px;top:137px;width:18px;height:15px;background:#e6e6e6;border:1px solid #cfcfe6;"></div>
<div class="t" style="left:495.95px;top:138.00px;font-size:11px;color:#000;transform:scaleX(0.830);">D</div>
<div class="r" style="left:466px;top:154px;width:18px;height:14px;background:#e6e6e6;border:1px solid #cfcfe6;"></div>
<div class="t" style="left:472.26px;top:154.70px;font-size:11px;color:#000;transform:scaleX(0.830);">L</div>
<div class="r" style="left:439.3px;top:176.5px;width:73px;height:86px;background:transparent;border:1px solid #dcdcdc;"></div>
<div class="r" style="left:445px;top:172px;width:50px;height:8px;background:#fff;"></div>
<div class="t" style="left:446.50px;top:170.40px;font-size:11px;color:#000;transform:scaleX(0.789);">Entry Status</div>
<div class="t" style="left:454.00px;top:187.10px;font-size:11px;color:#000;transform:scaleX(0.800);">TreatPlan</div>
<div class="t" style="left:454.00px;top:199.80px;font-size:11px;color:#000;transform:scaleX(0.800);">Complete</div>
<div class="t" style="left:454.00px;top:212.50px;font-size:11px;color:#000;transform:scaleX(0.800);">ExistCurProv</div>
<div class="t" style="left:454.00px;top:225.20px;font-size:11px;color:#000;transform:scaleX(0.800);">ExistOther</div>
<div class="t" style="left:454.00px;top:237.90px;font-size:11px;color:#000;transform:scaleX(0.800);">Referred</div>
<div class="t" style="left:454.00px;top:250.60px;font-size:11px;color:#000;transform:scaleX(0.800);">Condition</div>
<div class="t" style="left:453.00px;top:264.40px;font-size:11px;color:#000;transform:scaleX(0.830);">Today</div>
<div class="r" style="left:438px;top:277.3px;width:75px;height:16.7px;background:#fff;border:1px solid #7a7a7a;"></div>
<div class="t" style="left:440.50px;top:279.40px;font-size:11px;color:#000;transform:scaleX(0.836);">09/06/2017</div>
<div class="t" style="left:515.50px;top:100.90px;font-size:11px;color:#000;transform:scaleX(0.830);">Diagnosis</div>
<div class="r" style="left:514.5px;top:113.3px;width:79px;height:112.5px;background:#fff;border:1px solid #828282;"></div>
<div class="r" style="left:578.6px;top:114.3px;width:14px;height:110.5px;background:#f0f0f0;"></div>
<div class="r" style="left:579.5px;top:128.8px;width:12px;height:61.6px;background:#cdcdcd;"></div>
<div class="r" style="left:515px;top:114.0px;width:63px;height:11px;overflow:hidden"></div>
<div class="t" style="left:518.20px;top:114.40px;font-size:11px;color:#000;transform:scaleX(0.790);max-width:76px;overflow:hidden;">None</div>
<div class="r" style="left:515px;top:124.9px;width:63px;height:11px;overflow:hidden"></div>
<div class="t" style="left:518.20px;top:125.28px;font-size:11px;color:#000;transform:scaleX(0.790);max-width:76px;overflow:hidden;">Caries</div>
<div class="r" style="left:515px;top:135.8px;width:63px;height:11px;overflow:hidden"></div>
<div class="t" style="left:518.20px;top:136.16px;font-size:11px;color:#000;transform:scaleX(0.790);max-width:76px;overflow:hidden;">Recurrent (Car)</div>
<div class="r" style="left:515px;top:146.6px;width:63px;height:11px;overflow:hidden"></div>
<div class="t" style="left:518.20px;top:147.04px;font-size:11px;color:#000;transform:scaleX(0.790);max-width:76px;overflow:hidden;">Incipient (Car)</div>
<div class="r" style="left:515px;top:157.5px;width:63px;height:11px;overflow:hidden"></div>
<div class="t" style="left:518.20px;top:157.92px;font-size:11px;color:#000;transform:scaleX(0.790);max-width:76px;overflow:hidden;">Defect (or miss</div>
<div class="r" style="left:515px;top:168.4px;width:63px;height:11px;overflow:hidden"></div>
<div class="t" style="left:518.20px;top:168.80px;font-size:11px;color:#000;transform:scaleX(0.790);max-width:76px;overflow:hidden;">Missing (tooth s</div>
<div class="r" style="left:515px;top:179.3px;width:63px;height:11px;overflow:hidden"></div>
<div class="t" style="left:518.20px;top:179.68px;font-size:11px;color:#000;transform:scaleX(0.790);max-width:76px;overflow:hidden;">Irrevers. Pulp.</div>
<div class="r" style="left:515px;top:190.2px;width:63px;height:11px;overflow:hidden"></div>
<div class="t" style="left:518.20px;top:190.56px;font-size:11px;color:#000;transform:scaleX(0.790);max-width:76px;overflow:hidden;">Revers. Pulp.</div>
<div class="r" style="left:515px;top:201.0px;width:63px;height:11px;overflow:hidden"></div>
<div class="t" style="left:518.20px;top:201.44px;font-size:11px;color:#000;transform:scaleX(0.790);max-width:76px;overflow:hidden;">Necrotic</div>
<div class="r" style="left:515px;top:211.9px;width:63px;height:11px;overflow:hidden"></div>
<div class="t" style="left:518.20px;top:212.32px;font-size:11px;color:#000;transform:scaleX(0.790);max-width:76px;overflow:hidden;">Apical Perio</div>
<div class="t" style="left:515.80px;top:232.80px;font-size:11px;color:#000;transform:scaleX(0.830);">Prognosis</div>
<div class="r" style="left:514.5px;top:246.3px;width:80.5px;height:17px;background:#e1e1e1;border:1px solid #adadad;"></div>
<div class="t" style="left:517.50px;top:248.60px;font-size:11px;color:#000;transform:scaleX(0.830);">no prognosis</div>
<div class="t" style="left:515.80px;top:264.30px;font-size:11px;color:#000;transform:scaleX(0.830);">Priority</div>
<div class="r" style="left:514.5px;top:277.2px;width:80.5px;height:17px;background:#e1e1e1;border:1px solid #adadad;"></div>
<div class="t" style="left:517.50px;top:279.60px;font-size:11px;color:#000;transform:scaleX(0.830);">no priority</div>
<div class="r" style="left:600px;top:102px;width:73px;height:17px;background:#e6e6e6;border:1px solid #cfcfe6;"></div>
<div class="t" style="left:606.97px;top:103.75px;font-size:11px;color:#000;transform:scaleX(0.830);">Procedure List</div>
<div class="t" style="left:596.00px;top:120.60px;font-size:11px;color:#000;transform:scaleX(0.805);">Procedure Buttons:</div>
<div class="r" style="left:595.4px;top:133.2px;width:102.7px;height:144.3px;background:#fff;border:1px solid #828282;"></div>
<div class="r" style="left:597px;top:135px;width:99.8px;height:10.7px;background:#3399ff;"></div>
<div class="t" style="left:597.50px;top:134.30px;font-size:11px;color:#fff;transform:scaleX(0.830);">Quick Buttons</div>
<div class="t" style="left:597.50px;top:145.30px;font-size:11px;color:#000;transform:scaleX(0.830);">General</div>
<div class="t" style="left:597.50px;top:156.20px;font-size:11px;color:#000;transform:scaleX(0.830);">Exams &amp; Xrays</div>
<div class="t" style="left:597.50px;top:167.10px;font-size:11px;color:#000;transform:scaleX(0.830);">Crowns &amp; Bridges</div>
<div class="t" style="left:614.00px;top:279.70px;font-size:11px;color:#000;transform:scaleX(0.793);">Treatment Plans</div>
<div class="t" style="left:700.30px;top:104.40px;font-size:11px;color:#000;transform:scaleX(0.830);">Or</div>
<div class="r" style="left:716px;top:102.4px;width:91px;height:16px;background:#fff;border:1px solid #7a7a7a;"></div>
<div class="t" style="left:718.70px;top:104.10px;font-size:11px;color:#000;transform:scaleX(0.799);">Type Proc Code</div>
<div class="r" style="left:811.5px;top:101.7px;width:35px;height:16.7px;background:#fcfcfc;border:1px solid #c4c4e0;"></div>
<div class="t" style="left:822.40px;top:104.10px;font-size:11px;color:#000;transform:scaleX(0.830);">OK</div>
<div class="t" style="left:700.00px;top:120.80px;font-size:11px;color:#000;transform:scaleX(0.830);">Or Single Click:</div>
<div class="r" style="left:700.3px;top:133.3px;width:167.5px;height:161.2px;background:#fff;border:1px solid #8c8cb0;"></div>
<div class="t" style="left:707.30px;top:134.40px;font-size:11px;color:#000;transform:scaleX(0.830);">Post. Composite</div>
<div class="r" style="left:701.2px;top:149.1px;width:33.3px;height:13.6px;background:linear-gradient(#dedee8,#ececf2 45%,#dcdce6)"></div>
<div class="t" style="left:710.50px;top:149.50px;font-size:11px;color:#9b2f9b;transform:scaleX(0.830);">MO</div>
<div class="r" style="left:736.3px;top:149.1px;width:41.3px;height:13.6px;background:linear-gradient(#dedee8,#ececf2 45%,#dcdce6)"></div>
<div class="t" style="left:746.30px;top:149.50px;font-size:11px;color:#9b2f9b;transform:scaleX(0.830);">MOD</div>
<div class="r" style="left:779.0px;top:149.1px;width:25.8px;height:13.6px;background:linear-gradient(#dedee8,#ececf2 45%,#dcdce6)"></div>
<div class="t" style="left:788.35px;top:149.50px;font-size:11px;color:#9b2f9b;transform:scaleX(0.830);">O</div>
<div class="r" style="left:806.0px;top:149.1px;width:33.5px;height:13.6px;background:linear-gradient(#dedee8,#ececf2 45%,#dcdce6)"></div>
<div class="t" style="left:815.90px;top:149.50px;font-size:11px;color:#9b2f9b;transform:scaleX(0.830);">DO</div>
<div class="r" style="left:701.2px;top:164.0px;width:30.7px;height:13.6px;background:linear-gradient(#dedee8,#ececf2 45%,#dcdce6)"></div>
<div class="t" style="left:710.46px;top:164.40px;font-size:11px;color:#9b2f9b;transform:scaleX(0.830);">OL</div>
<div class="r" style="left:733.7px;top:164.0px;width:32.5px;height:13.6px;background:linear-gradient(#dedee8,#ececf2 45%,#dcdce6)"></div>
<div class="t" style="left:743.35px;top:164.40px;font-size:11px;color:#9b2f9b;transform:scaleX(0.830);">OB</div>
<div class="r" style="left:767.6px;top:164.0px;width:46.4px;height:13.6px;background:linear-gradient(#dedee8,#ececf2 45%,#dcdce6)"></div>
<div class="t" style="left:777.61px;top:164.40px;font-size:11px;color:#9b2f9b;transform:scaleX(0.830);">MODL</div>
<div class="r" style="left:815.4px;top:164.0px;width:47.8px;height:13.6px;background:linear-gradient(#dedee8,#ececf2 45%,#dcdce6)"></div>
<div class="t" style="left:825.60px;top:164.40px;font-size:11px;color:#9b2f9b;transform:scaleX(0.830);">MODB</div>
<div class="t" style="left:706.80px;top:195.40px;font-size:11px;color:#000;transform:scaleX(0.830);">Ant. Composite</div>
<div class="r" style="left:701.2px;top:209.7px;width:30.3px;height:13.8px;background:linear-gradient(#dedee8,#ececf2 45%,#dcdce6)"></div>
<div class="t" style="left:710.51px;top:210.20px;font-size:11px;color:#9b2f9b;transform:scaleX(0.830);">DL</div>
<div class="r" style="left:733.1px;top:209.7px;width:38.6px;height:13.8px;background:linear-gradient(#dedee8,#ececf2 45%,#dcdce6)"></div>
<div class="t" style="left:742.76px;top:210.20px;font-size:11px;color:#9b2f9b;transform:scaleX(0.830);">MDL</div>
<div class="r" style="left:773.5px;top:209.7px;width:31.5px;height:13.8px;background:linear-gradient(#dedee8,#ececf2 45%,#dcdce6)"></div>
<div class="t" style="left:782.91px;top:210.20px;font-size:11px;color:#9b2f9b;transform:scaleX(0.830);">ML</div>
<div class="t" style="left:706.80px;top:240.40px;font-size:11px;color:#000;transform:scaleX(0.830);">Amalgam</div>
<div class="r" style="left:701.2px;top:255.4px;width:33.3px;height:13.4px;background:linear-gradient(#dedee8,#ececf2 45%,#dcdce6)"></div>
<div class="t" style="left:710.50px;top:255.70px;font-size:11px;color:#9b2f9b;transform:scaleX(0.830);">MO</div>
<div class="r" style="left:736.6px;top:255.4px;width:41.2px;height:13.4px;background:linear-gradient(#dedee8,#ececf2 45%,#dcdce6)"></div>
<div class="t" style="left:746.55px;top:255.70px;font-size:11px;color:#9b2f9b;transform:scaleX(0.830);">MOD</div>
<div class="r" style="left:779.2px;top:255.4px;width:25.3px;height:13.4px;background:linear-gradient(#dedee8,#ececf2 45%,#dcdce6)"></div>
<div class="t" style="left:788.30px;top:255.70px;font-size:11px;color:#9b2f9b;transform:scaleX(0.830);">O</div>
<div class="r" style="left:806.2px;top:255.4px;width:33.2px;height:13.4px;background:linear-gradient(#dedee8,#ececf2 45%,#dcdce6)"></div>
<div class="t" style="left:815.95px;top:255.70px;font-size:11px;color:#9b2f9b;transform:scaleX(0.830);">DO</div>
<div class="r" style="left:701.2px;top:270.6px;width:30.7px;height:13.8px;background:linear-gradient(#dedee8,#ececf2 45%,#dcdce6)"></div>
<div class="t" style="left:710.46px;top:271.10px;font-size:11px;color:#9b2f9b;transform:scaleX(0.830);">OL</div>
<div class="r" style="left:734.0px;top:270.6px;width:32.0px;height:13.8px;background:linear-gradient(#dedee8,#ececf2 45%,#dcdce6)"></div>
<div class="t" style="left:743.40px;top:271.10px;font-size:11px;color:#9b2f9b;transform:scaleX(0.830);">OB</div>
<div class="r" style="left:767.6px;top:270.6px;width:46.4px;height:13.8px;background:linear-gradient(#dedee8,#ececf2 45%,#dcdce6)"></div>
<div class="t" style="left:777.61px;top:271.10px;font-size:11px;color:#9b2f9b;transform:scaleX(0.830);">MODL</div>
<div class="r" style="left:815.7px;top:270.6px;width:47.7px;height:13.8px;background:linear-gradient(#dedee8,#ececf2 45%,#dcdce6)"></div>
<div class="t" style="left:825.85px;top:271.10px;font-size:11px;color:#9b2f9b;transform:scaleX(0.830);">MODB</div>
<svg style="left:0;top:0" width="1024" height="666"><circle cx="445.6" cy="193.3" r="5.2" fill="#fff" stroke="#333" stroke-width="1"/><circle cx="445.6" cy="193.3" r="2.8" fill="#222"/><circle cx="445.6" cy="206.0" r="5.2" fill="#fff" stroke="#333" stroke-width="1"/><circle cx="445.6" cy="218.7" r="5.2" fill="#fff" stroke="#333" stroke-width="1"/><circle cx="445.6" cy="231.4" r="5.2" fill="#fff" stroke="#333" stroke-width="1"/><circle cx="445.6" cy="244.1" r="5.2" fill="#fff" stroke="#333" stroke-width="1"/><circle cx="445.6" cy="256.8" r="5.2" fill="#fff" stroke="#333" stroke-width="1"/><rect x="438.8" y="265.2" width="10.5" height="10.5" fill="#fff" stroke="#333" stroke-width="1"/><polyline points="440.8,270.5 443.3,273.3 447.8,267" fill="none" stroke="#333" stroke-width="1.1"/><polyline points="582,124 585.3,120.5 588.6,124" fill="none" stroke="#555" stroke-width="1.1"/><polyline points="582,216 585.3,219.5 588.6,216" fill="none" stroke="#555" stroke-width="1.1"/><polyline points="583,253.5 586.5,257 590,253.5" fill="none" stroke="#444" stroke-width="1"/><polyline points="583,284.5 586.5,288 590,284.5" fill="none" stroke="#444" stroke-width="1"/><rect x="600.5" y="281" width="10.3" height="10.3" fill="#fff" stroke="#333" stroke-width="1"/></svg>
<div class="r" style="left:434px;top:320px;width:586px;height:346px;background:#c8d3df;border-left:1px solid #5a6e9a;border-right:1px solid #5a6e9a;"></div>
<div class="r" style="left:434px;top:320px;width:586px;height:16px;background:linear-gradient(#93a9e0,#5f7cc0 70%,#4a68ac);border-bottom:1px solid #3a5590;border-top:1px solid #7088c0"></div>
<div class="t" style="left:693.80px;top:323.15px;font-size:10.5px;color:#fff;font-weight:bold;transform:scaleX(1.112);">Default View</div>
<div class="r" style="left:435px;top:336px;width:584px;height:13px;background:#dfe8f2;border-bottom:1px solid #9aa2aa;"></div>
<div class="t" style="left:452.82px;top:336.96px;font-size:10.6px;color:#111;font-weight:bold;transform:scaleX(0.930);">Date</div>
<div class="r" style="left:492px;top:338px;width:1px;height:10px;background:#a8b4c0;"></div>
<div class="t" style="left:497.73px;top:336.96px;font-size:10.6px;color:#111;font-weight:bold;transform:scaleX(0.930);">Th</div>
<div class="r" style="left:515px;top:338px;width:1px;height:10px;background:#a8b4c0;"></div>
<div class="t" style="left:521.94px;top:336.96px;font-size:10.6px;color:#111;font-weight:bold;transform:scaleX(0.930);">Surf</div>
<div class="r" style="left:549px;top:338px;width:1px;height:10px;background:#a8b4c0;"></div>
<div class="t" style="left:554.30px;top:336.96px;font-size:10.6px;color:#111;font-weight:bold;transform:scaleX(0.930);">Dx</div>
<div class="r" style="left:573px;top:338px;width:1px;height:10px;background:#a8b4c0;"></div>
<div class="t" style="left:637.24px;top:336.96px;font-size:10.6px;color:#111;font-weight:bold;transform:scaleX(0.930);">Description</div>
<div class="r" style="left:756px;top:338px;width:1px;height:10px;background:#a8b4c0;"></div>
<div class="t" style="left:757.34px;top:336.96px;font-size:10.6px;color:#111;font-weight:bold;transform:scaleX(0.930);">Stat</div>
<div class="r" style="left:777px;top:338px;width:1px;height:10px;background:#a8b4c0;"></div>
<div class="t" style="left:783.84px;top:336.96px;font-size:10.6px;color:#111;font-weight:bold;transform:scaleX(0.930);">Prov</div>
<div class="r" style="left:812px;top:338px;width:1px;height:10px;background:#a8b4c0;"></div>
<div class="t" style="left:814.23px;top:336.96px;font-size:10.6px;color:#111;font-weight:bold;transform:scaleX(0.930);">Amount</div>
<div class="r" style="left:853px;top:338px;width:1px;height:10px;background:#a8b4c0;"></div>
<div class="t" style="left:854.96px;top:336.96px;font-size:10.6px;color:#111;font-weight:bold;transform:scaleX(0.930);">ADA Code</div>
<div class="r" style="left:905px;top:338px;width:1px;height:10px;background:#a8b4c0;"></div>
<div class="t" style="left:920.44px;top:336.96px;font-size:10.6px;color:#111;font-weight:bold;transform:scaleX(0.930);">User</div>
<div class="r" style="left:958px;top:338px;width:1px;height:10px;background:#a8b4c0;"></div>
<div class="t" style="left:964.47px;top:336.96px;font-size:10.6px;color:#111;font-weight:bold;transform:scaleX(0.930);">Signed</div>
<div class="r" style="left:1004px;top:349px;width:15px;height:317px;background:#f0f0f0;"></div>
<svg style="left:0;top:0" width="1024" height="666"><polyline points="1008,360 1011.5,356.5 1015,360" fill="none" stroke="#b8b8b8" stroke-width="1.2"/></svg>
<div class="r" style="left:435px;top:349px;width:569px;height:14px;background:#fff;"></div>
<div class="r" style="left:492px;top:349px;width:1px;height:14px;background:#c0c0c0;"></div>
<div class="r" style="left:515px;top:349px;width:1px;height:14px;background:#c0c0c0;"></div>
<div class="r" style="left:549px;top:349px;width:1px;height:14px;background:#c0c0c0;"></div>
<div class="r" style="left:573px;top:349px;width:1px;height:14px;background:#c0c0c0;"></div>
<div class="r" style="left:756px;top:349px;width:1px;height:14px;background:#c0c0c0;"></div>
<div class="r" style="left:777px;top:349px;width:1px;height:14px;background:#c0c0c0;"></div>
<div class="r" style="left:812px;top:349px;width:1px;height:14px;background:#c0c0c0;"></div>
<div class="r" style="left:853px;top:349px;width:1px;height:14px;background:#c0c0c0;"></div>
<div class="r" style="left:905px;top:349px;width:1px;height:14px;background:#c0c0c0;"></div>
<div class="r" style="left:958px;top:349px;width:1px;height:14px;background:#c0c0c0;"></div>
<div class="t" style="left:573.00px;top:349.40px;font-size:11px;color:#a52a2a;transform:scaleX(0.860);">Fluoride</div>
<div class="t" style="left:757.80px;top:349.40px;font-size:11px;color:#a52a2a;transform:scaleX(0.860);">TP</div>
<div class="t" style="left:778.40px;top:349.40px;font-size:11px;color:#a52a2a;transform:scaleX(0.860);">DOC1</div>
<div class="t" style="left:827.63px;top:349.40px;font-size:11px;color:#a52a2a;transform:scaleX(0.860);">10.00</div>
<div class="t" style="left:865.79px;top:349.40px;font-size:11px;color:#a52a2a;transform:scaleX(0.860);">T1254</div>
<div class="r" style="left:435px;top:363px;width:569px;height:13px;background:#fff;"></div>
<div class="r" style="left:492px;top:363px;width:1px;height:13px;background:#c0c0c0;"></div>
<div class="r" style="left:515px;top:363px;width:1px;height:13px;background:#c0c0c0;"></div>
<div class="r" style="left:549px;top:363px;width:1px;height:13px;background:#c0c0c0;"></div>
<div class="r" style="left:573px;top:363px;width:1px;height:13px;background:#c0c0c0;"></div>
<div class="r" style="left:756px;top:363px;width:1px;height:13px;background:#c0c0c0;"></div>
<div class="r" style="left:777px;top:363px;width:1px;height:13px;background:#c0c0c0;"></div>
<div class="r" style="left:812px;top:363px;width:1px;height:13px;background:#c0c0c0;"></div>
<div class="r" style="left:853px;top:363px;width:1px;height:13px;background:#c0c0c0;"></div>
<div class="r" style="left:905px;top:363px;width:1px;height:13px;background:#c0c0c0;"></div>
<div class="r" style="left:958px;top:363px;width:1px;height:13px;background:#c0c0c0;"></div>
<div class="t" style="left:573.00px;top:363.10px;font-size:11px;color:#a52a2a;transform:scaleX(0.860);">Exam</div>
<div class="t" style="left:757.80px;top:363.10px;font-size:11px;color:#a52a2a;transform:scaleX(0.860);">TP</div>
<div class="t" style="left:778.40px;top:363.10px;font-size:11px;color:#a52a2a;transform:scaleX(0.860);">DOC1</div>
<div class="t" style="left:827.63px;top:363.10px;font-size:11px;color:#a52a2a;transform:scaleX(0.860);">60.00</div>
<div class="t" style="left:865.79px;top:363.10px;font-size:11px;color:#a52a2a;transform:scaleX(0.860);">T1356</div>
<div class="r" style="left:435px;top:376px;width:569px;height:14px;background:#fff;"></div>
<div class="r" style="left:492px;top:376px;width:1px;height:14px;background:#c0c0c0;"></div>
<div class="r" style="left:515px;top:376px;width:1px;height:14px;background:#c0c0c0;"></div>
<div class="r" style="left:549px;top:376px;width:1px;height:14px;background:#c0c0c0;"></div>
<div class="r" style="left:573px;top:376px;width:1px;height:14px;background:#c0c0c0;"></div>
<div class="r" style="left:756px;top:376px;width:1px;height:14px;background:#c0c0c0;"></div>
<div class="r" style="left:777px;top:376px;width:1px;height:14px;background:#c0c0c0;"></div>
<div class="r" style="left:812px;top:376px;width:1px;height:14px;background:#c0c0c0;"></div>
<div class="r" style="left:853px;top:376px;width:1px;height:14px;background:#c0c0c0;"></div>
<div class="r" style="left:905px;top:376px;width:1px;height:14px;background:#c0c0c0;"></div>
<div class="r" style="left:958px;top:376px;width:1px;height:14px;background:#c0c0c0;"></div>
<div class="t" style="left:573.00px;top:376.60px;font-size:11px;color:#a52a2a;transform:scaleX(0.860);">2 Bitewings</div>
<div class="t" style="left:757.80px;top:376.60px;font-size:11px;color:#a52a2a;transform:scaleX(0.860);">TP</div>
<div class="t" style="left:778.40px;top:376.60px;font-size:11px;color:#a52a2a;transform:scaleX(0.860);">DOC1</div>
<div class="t" style="left:827.63px;top:376.60px;font-size:11px;color:#a52a2a;transform:scaleX(0.860);">30.00</div>
<div class="t" style="left:865.79px;top:376.60px;font-size:11px;color:#a52a2a;transform:scaleX(0.860);">T1632</div>
<div class="r" style="left:435px;top:390px;width:569px;height:13px;background:#fff;"></div>
<div class="r" style="left:492px;top:390px;width:1px;height:13px;background:#c0c0c0;"></div>
<div class="r" style="left:515px;top:390px;width:1px;height:13px;background:#c0c0c0;"></div>
<div class="r" style="left:549px;top:390px;width:1px;height:13px;background:#c0c0c0;"></div>
<div class="r" style="left:573px;top:390px;width:1px;height:13px;background:#c0c0c0;"></div>
<div class="r" style="left:756px;top:390px;width:1px;height:13px;background:#c0c0c0;"></div>
<div class="r" style="left:777px;top:390px;width:1px;height:13px;background:#c0c0c0;"></div>
<div class="r" style="left:812px;top:390px;width:1px;height:13px;background:#c0c0c0;"></div>
<div class="r" style="left:853px;top:390px;width:1px;height:13px;background:#c0c0c0;"></div>
<div class="r" style="left:905px;top:390px;width:1px;height:13px;background:#c0c0c0;"></div>
<div class="r" style="left:958px;top:390px;width:1px;height:13px;background:#c0c0c0;"></div>
<div class="t" style="left:573.00px;top:390.10px;font-size:11px;color:#a52a2a;transform:scaleX(0.860);">Prophy, Adult</div>
<div class="t" style="left:757.80px;top:390.10px;font-size:11px;color:#a52a2a;transform:scaleX(0.860);">TP</div>
<div class="t" style="left:778.40px;top:390.10px;font-size:11px;color:#a52a2a;transform:scaleX(0.860);">DOC1</div>
<div class="t" style="left:827.63px;top:390.10px;font-size:11px;color:#a52a2a;transform:scaleX(0.860);">70.00</div>
<div class="t" style="left:865.79px;top:390.10px;font-size:11px;color:#a52a2a;transform:scaleX(0.860);">T3541</div>
<div class="r" style="left:435px;top:403px;width:569px;height:14px;background:#fff;"></div>
<div class="r" style="left:492px;top:403px;width:1px;height:14px;background:#c0c0c0;"></div>
<div class="r" style="left:515px;top:403px;width:1px;height:14px;background:#c0c0c0;"></div>
<div class="r" style="left:549px;top:403px;width:1px;height:14px;background:#c0c0c0;"></div>
<div class="r" style="left:573px;top:403px;width:1px;height:14px;background:#c0c0c0;"></div>
<div class="r" style="left:756px;top:403px;width:1px;height:14px;background:#c0c0c0;"></div>
<div class="r" style="left:777px;top:403px;width:1px;height:14px;background:#c0c0c0;"></div>
<div class="r" style="left:812px;top:403px;width:1px;height:14px;background:#c0c0c0;"></div>
<div class="r" style="left:853px;top:403px;width:1px;height:14px;background:#c0c0c0;"></div>
<div class="r" style="left:905px;top:403px;width:1px;height:14px;background:#c0c0c0;"></div>
<div class="r" style="left:958px;top:403px;width:1px;height:14px;background:#c0c0c0;"></div>
<div class="t" style="left:437.80px;top:403.70px;font-size:11px;color:#a52a2a;transform:scaleX(0.826);">03/30/2009</div>
<div class="t" style="left:494.20px;top:403.70px;font-size:11px;color:#a52a2a;transform:scaleX(0.860);">19</div>
<div class="t" style="left:516.20px;top:403.70px;font-size:11px;color:#a52a2a;transform:scaleX(0.860);">O</div>
<div class="t" style="left:573.00px;top:403.70px;font-size:11px;color:#a52a2a;transform:scaleX(0.860);">Composite-1 Surf, Posterior</div>
<div class="t" style="left:757.80px;top:403.70px;font-size:11px;color:#a52a2a;transform:scaleX(0.860);">TP</div>
<div class="t" style="left:778.40px;top:403.70px;font-size:11px;color:#a52a2a;transform:scaleX(0.860);">DOC2</div>
<div class="t" style="left:822.36px;top:403.70px;font-size:11px;color:#a52a2a;transform:scaleX(0.860);">130.00</div>
<div class="t" style="left:865.79px;top:403.70px;font-size:11px;color:#a52a2a;transform:scaleX(0.860);">T5823</div>
<div class="r" style="left:435px;top:417px;width:569px;height:13px;background:#fff;"></div>
<div class="r" style="left:492px;top:417px;width:1px;height:13px;background:#c0c0c0;"></div>
<div class="r" style="left:515px;top:417px;width:1px;height:13px;background:#c0c0c0;"></div>
<div class="r" style="left:549px;top:417px;width:1px;height:13px;background:#c0c0c0;"></div>
<div class="r" style="left:573px;top:417px;width:1px;height:13px;background:#c0c0c0;"></div>
<div class="r" style="left:756px;top:417px;width:1px;height:13px;background:#c0c0c0;"></div>
<div class="r" style="left:777px;top:417px;width:1px;height:13px;background:#c0c0c0;"></div>
<div class="r" style="left:812px;top:417px;width:1px;height:13px;background:#c0c0c0;"></div>
<div class="r" style="left:853px;top:417px;width:1px;height:13px;background:#c0c0c0;"></div>
<div class="r" style="left:905px;top:417px;width:1px;height:13px;background:#c0c0c0;"></div>
<div class="r" style="left:958px;top:417px;width:1px;height:13px;background:#c0c0c0;"></div>
<div class="t" style="left:437.80px;top:417.20px;font-size:11px;color:#2e9a2e;transform:scaleX(0.826);">03/30/2009</div>
<div class="t" style="left:494.20px;top:417.20px;font-size:11px;color:#2e9a2e;transform:scaleX(0.860);">30</div>
<div class="t" style="left:516.20px;top:417.20px;font-size:11px;color:#2e9a2e;transform:scaleX(0.860);">MO</div>
<div class="t" style="left:573.00px;top:417.20px;font-size:11px;color:#2e9a2e;transform:scaleX(0.860);">Amalgam-2 Surf</div>
<div class="t" style="left:757.80px;top:417.20px;font-size:11px;color:#2e9a2e;transform:scaleX(0.860);">EC</div>
<div class="t" style="left:778.40px;top:417.20px;font-size:11px;color:#2e9a2e;transform:scaleX(0.860);">DOC2</div>
<div class="t" style="left:827.63px;top:417.20px;font-size:11px;color:#2e9a2e;transform:scaleX(0.860);">80.00</div>
<div class="t" style="left:865.79px;top:417.20px;font-size:11px;color:#2e9a2e;transform:scaleX(0.860);">T4538</div>
<div class="r" style="left:435px;top:430px;width:569px;height:25px;background:#fff;"></div>
<div class="r" style="left:492px;top:430px;width:1px;height:25px;background:#c0c0c0;"></div>
<div class="r" style="left:515px;top:430px;width:1px;height:25px;background:#c0c0c0;"></div>
<div class="r" style="left:549px;top:430px;width:1px;height:25px;background:#c0c0c0;"></div>
<div class="r" style="left:573px;top:430px;width:1px;height:25px;background:#c0c0c0;"></div>
<div class="r" style="left:756px;top:430px;width:1px;height:25px;background:#c0c0c0;"></div>
<div class="r" style="left:777px;top:430px;width:1px;height:25px;background:#c0c0c0;"></div>
<div class="r" style="left:812px;top:430px;width:1px;height:25px;background:#c0c0c0;"></div>
<div class="r" style="left:853px;top:430px;width:1px;height:25px;background:#c0c0c0;"></div>
<div class="r" style="left:905px;top:430px;width:1px;height:25px;background:#c0c0c0;"></div>
<div class="r" style="left:958px;top:430px;width:1px;height:25px;background:#c0c0c0;"></div>
<div class="t" style="left:437.80px;top:430.70px;font-size:11px;color:#a028b0;transform:scaleX(0.826);">04/30/2009</div>
<div class="t" style="left:573.00px;top:430.70px;font-size:11px;color:#a028b0;transform:scaleX(0.860);">PLANNED Appointment</div>
<div class="t" style="left:573.00px;top:441.60px;font-size:11px;color:#a028b0;transform:scaleX(0.860);">C1(P)</div>
<div class="r" style="left:435px;top:455px;width:569px;height:24px;background:#fff;"></div>
<div class="r" style="left:492px;top:455px;width:1px;height:24px;background:#c0c0c0;"></div>
<div class="r" style="left:515px;top:455px;width:1px;height:24px;background:#c0c0c0;"></div>
<div class="r" style="left:549px;top:455px;width:1px;height:24px;background:#c0c0c0;"></div>
<div class="r" style="left:573px;top:455px;width:1px;height:24px;background:#c0c0c0;"></div>
<div class="r" style="left:756px;top:455px;width:1px;height:24px;background:#c0c0c0;"></div>
<div class="r" style="left:777px;top:455px;width:1px;height:24px;background:#c0c0c0;"></div>
<div class="r" style="left:812px;top:455px;width:1px;height:24px;background:#c0c0c0;"></div>
<div class="r" style="left:853px;top:455px;width:1px;height:24px;background:#c0c0c0;"></div>
<div class="r" style="left:905px;top:455px;width:1px;height:24px;background:#c0c0c0;"></div>
<div class="r" style="left:958px;top:455px;width:1px;height:24px;background:#c0c0c0;"></div>
<div class="t" style="left:437.80px;top:455.00px;font-size:11px;color:#a028b0;transform:scaleX(0.826);">04/30/2009</div>
<div class="t" style="left:573.00px;top:455.00px;font-size:11px;color:#a028b0;transform:scaleX(0.860);">Appointment - 2:10 PM</div>
<div class="t" style="left:573.00px;top:465.90px;font-size:11px;color:#a028b0;transform:scaleX(0.860);">Ext</div>
<div class="r" style="left:435px;top:479px;width:569px;height:13px;background:#fff;"></div>
<div class="r" style="left:492px;top:479px;width:1px;height:13px;background:#c0c0c0;"></div>
<div class="r" style="left:515px;top:479px;width:1px;height:13px;background:#c0c0c0;"></div>
<div class="r" style="left:549px;top:479px;width:1px;height:13px;background:#c0c0c0;"></div>
<div class="r" style="left:573px;top:479px;width:1px;height:13px;background:#c0c0c0;"></div>
<div class="r" style="left:756px;top:479px;width:1px;height:13px;background:#c0c0c0;"></div>
<div class="r" style="left:777px;top:479px;width:1px;height:13px;background:#c0c0c0;"></div>
<div class="r" style="left:812px;top:479px;width:1px;height:13px;background:#c0c0c0;"></div>
<div class="r" style="left:853px;top:479px;width:1px;height:13px;background:#c0c0c0;"></div>
<div class="r" style="left:905px;top:479px;width:1px;height:13px;background:#c0c0c0;"></div>
<div class="r" style="left:958px;top:479px;width:1px;height:13px;background:#c0c0c0;"></div>
<div class="t" style="left:437.80px;top:479.40px;font-size:11px;color:#000;transform:scaleX(0.826);">05/01/2009</div>
<div class="t" style="left:494.20px;top:479.40px;font-size:11px;color:#000;transform:scaleX(0.860);">14</div>
<div class="t" style="left:573.00px;top:479.40px;font-size:11px;color:#000;transform:scaleX(0.860);">Extraction</div>
<div class="t" style="left:757.80px;top:479.40px;font-size:11px;color:#000;transform:scaleX(0.860);">C</div>
<div class="t" style="left:778.40px;top:479.40px;font-size:11px;color:#000;transform:scaleX(0.860);">DOC1</div>
<div class="t" style="left:822.36px;top:479.40px;font-size:11px;color:#000;transform:scaleX(0.860);">150.00</div>
<div class="t" style="left:865.79px;top:479.40px;font-size:11px;color:#000;transform:scaleX(0.860);">T6357</div>
<div class="r" style="left:435px;top:492px;width:569px;height:25px;background:#fff;"></div>
<div class="r" style="left:492px;top:492px;width:1px;height:25px;background:#c0c0c0;"></div>
<div class="r" style="left:515px;top:492px;width:1px;height:25px;background:#c0c0c0;"></div>
<div class="r" style="left:549px;top:492px;width:1px;height:25px;background:#c0c0c0;"></div>
<div class="r" style="left:573px;top:492px;width:1px;height:25px;background:#c0c0c0;"></div>
<div class="r" style="left:756px;top:492px;width:1px;height:25px;background:#c0c0c0;"></div>
<div class="r" style="left:777px;top:492px;width:1px;height:25px;background:#c0c0c0;"></div>
<div class="r" style="left:812px;top:492px;width:1px;height:25px;background:#c0c0c0;"></div>
<div class="r" style="left:853px;top:492px;width:1px;height:25px;background:#c0c0c0;"></div>
<div class="r" style="left:905px;top:492px;width:1px;height:25px;background:#c0c0c0;"></div>
<div class="r" style="left:958px;top:492px;width:1px;height:25px;background:#c0c0c0;"></div>
<div class="t" style="left:437.80px;top:492.70px;font-size:11px;color:#a028b0;transform:scaleX(0.826);">05/27/2009</div>
<div class="t" style="left:573.00px;top:492.70px;font-size:11px;color:#a028b0;transform:scaleX(0.860);">Appointment - 10:00 AM</div>
<div class="t" style="left:573.00px;top:503.60px;font-size:11px;color:#a028b0;transform:scaleX(0.860);">Flo, Ex, 2-BWX, Pro</div>
<div class="r" style="left:1003px;top:349px;width:1px;height:168px;background:#c8c8c8;"></div>
<div class="r" style="left:435px;top:362px;width:569px;height:2px;background:#4a4a4a;"></div>
<div class="r" style="left:435px;top:375px;width:569px;height:2px;background:#4a4a4a;"></div>
<div class="r" style="left:435px;top:389px;width:569px;height:2px;background:#4a4a4a;"></div>
<div class="r" style="left:435px;top:402px;width:569px;height:2px;background:#4a4a4a;"></div>
<div class="r" style="left:435px;top:416px;width:569px;height:2px;background:#4a4a4a;"></div>
<div class="r" style="left:435px;top:429px;width:569px;height:2px;background:#4a4a4a;"></div>
<div class="r" style="left:435px;top:454px;width:569px;height:2px;background:#4a4a4a;"></div>
<div class="r" style="left:435px;top:478px;width:569px;height:2px;background:#4a4a4a;"></div>
<div class="r" style="left:435px;top:491px;width:569px;height:2px;background:#4a4a4a;"></div>
<div class="r" style="left:435px;top:516px;width:569px;height:2px;background:#4a4a4a;"></div>
</body></html>
